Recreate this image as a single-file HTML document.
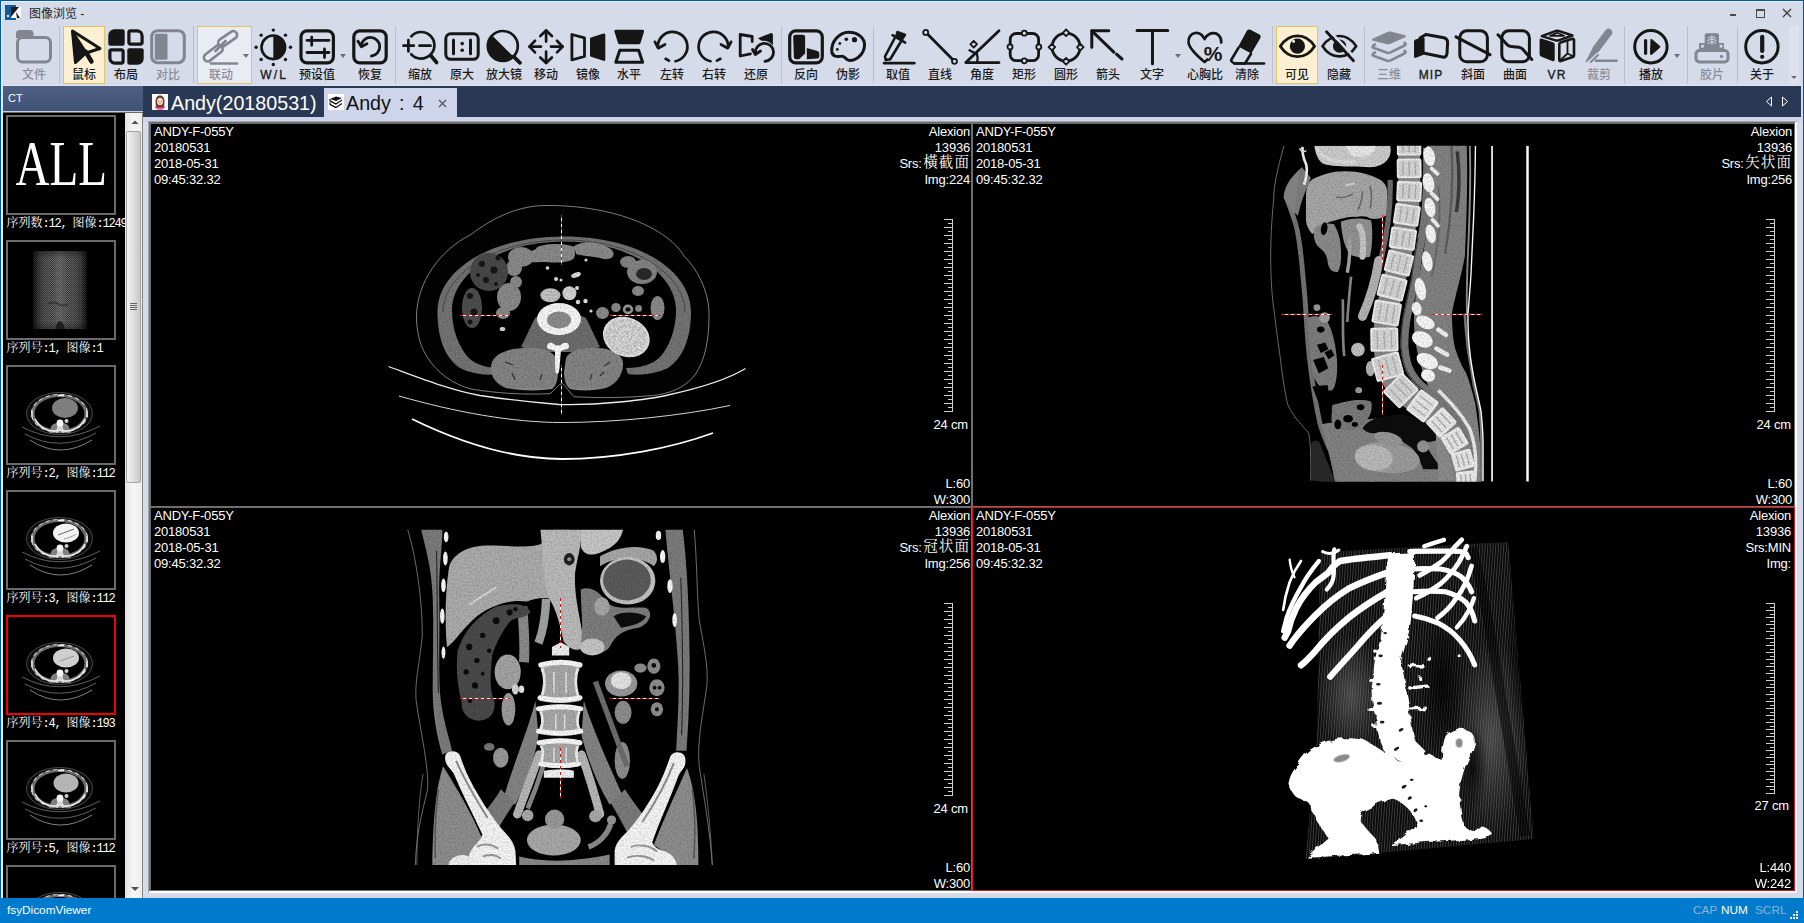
<!DOCTYPE html>
<html lang="zh-CN">
<head>
<meta charset="utf-8">
<title>图像浏览 - fsyDicomViewer</title>
<style>
*{box-sizing:border-box;margin:0;padding:0}
html,body{width:1804px;height:923px;overflow:hidden;background:#d6dbe9}
body{font-family:"Liberation Sans","Noto Sans CJK SC",sans-serif;position:relative}
#win{position:absolute;left:0;top:0;width:1804px;height:923px;background:#d6dbe9;overflow:hidden}
.abs{position:absolute}
#bt{left:0;top:0;width:1804px;height:1px;background:#005a9e}
#bl{left:0;top:0;width:1px;height:923px;background:#005a9e}
#br{left:1803px;top:0;width:1px;height:923px;background:#005a9e}
#title{left:29px;top:6px;font-size:12px;line-height:16px;color:#1e1e1e;white-space:nowrap}
.sep{position:absolute;top:26px;width:1px;height:57px;background:#bcc0cd}
.tbtn{position:absolute;top:26px;height:58px;border:1px solid #e5c365;background:#fdf0d2}
.tbtn.h{background:#e9ecf2}
.ico{position:absolute;top:29px;width:36px;height:36px;overflow:visible}
.lbl{position:absolute;top:66.5px;width:60px;margin-left:-30px;text-align:center;font-size:12px;line-height:16px;color:#1b1b1b;font-weight:500;white-space:nowrap;font-family:"Liberation Sans","Noto Sans CJK SC",sans-serif}
.lbl.g{color:#8b8e9a}
.lbl.e{font-weight:400;letter-spacing:1.1px;font-size:12px;-webkit-text-stroke:0.35px #1b1b1b}
.dd{position:absolute;width:0;height:0;border-left:3.5px solid transparent;border-right:3.5px solid transparent;border-top:4px solid #6d6f78}
#cthead{left:3px;top:86px;width:140px;height:25px;background:linear-gradient(#4d6082,#3f5378);color:#fff;font-size:11px;line-height:25px;padding-left:5px}
#side{left:3px;top:113px;width:122px;height:785px;background:#000;overflow:hidden}
.th{position:absolute;left:3px;width:110px;height:100px;border:2px solid #6b6b6b;background:#000;overflow:hidden}
.th.sel{border-color:#f00000}
.tl{position:absolute;left:3.5px;width:140px;font-size:12px;line-height:14px;color:#fff;white-space:nowrap;font-family:"Liberation Mono","Noto Serif CJK SC",serif;letter-spacing:0}
.tl b{font-weight:400;font-family:"Liberation Mono",monospace;letter-spacing:-1.2px;white-space:pre}
#sb{left:125px;top:113px;width:17px;height:785px;background:linear-gradient(90deg,#e4e4e4,#f6f6f6 50%,#ededed)}
#tabbar{left:143px;top:86px;width:1658px;height:31px;background:#293955}
#tab1{left:148px;top:88px;height:29px;color:#fff;font-size:19.7px;line-height:29px;white-space:nowrap}
#tab2{left:324px;top:88px;width:133px;height:29px;background:#ced4ea;color:#111;font-size:19.5px;line-height:29px;white-space:nowrap}
#status{left:0;top:898px;width:1804px;height:25px;background:#007acc;color:#fff;font-size:11.8px;line-height:24px}
.pan{position:absolute;background:#000;border:1px solid #6e6e6e;overflow:hidden;color:#fff;font-size:13px;line-height:16px;letter-spacing:-0.2px;font-family:"Liberation Sans","Noto Sans CJK SC",sans-serif}
.pan.sel{border-color:#e8131a}
.tlb{position:absolute;left:3px;top:-0.5px;white-space:pre;text-align:left}
.trb{position:absolute;right:1px;top:-0.5px;white-space:pre;text-align:right}
.brb{position:absolute;right:1px;bottom:-1.5px;white-space:pre;text-align:right}
.cm{position:absolute;right:3px;white-space:pre}
.cj{font-family:"Liberation Serif","Noto Serif CJK SC",serif;font-size:14.5px;letter-spacing:1.1px;margin-left:1.5px;line-height:0;position:relative;top:-0.3px}
svg{display:block}
</style>
</head>
<body>
<div id="win">

<div class="abs" id="bt"></div><div class="abs" style="left:1px;top:1px;width:1802px;height:1px;background:#eceef5"></div><div class="abs" id="bl"></div><div class="abs" id="br"></div>
<svg class="abs" style="left:5px;top:5px" width="16" height="16" viewBox="0 0 16 16"><rect x="0" y="0" width="11" height="15" fill="#0f5d9d"/><rect x="6" y="2" width="10" height="11" fill="#fff"/><path d="M6 2h8L6 12z" fill="#1a1a1a"/><path d="M11 7l4 6h-3z" fill="#1a1a1a"/><rect x="2" y="10" width="2" height="2" fill="#fff"/></svg>
<div class="abs" id="title">图像浏览 -</div>

<div class="sep" style="left:59px"></div>
<div class="sep" style="left:193px"></div>
<div class="sep" style="left:395px"></div>
<div class="sep" style="left:781px"></div>
<div class="sep" style="left:873px"></div>
<div class="sep" style="left:1272px"></div>
<div class="sep" style="left:1364px"></div>
<div class="sep" style="left:1624px"></div>
<div class="sep" style="left:1687px"></div>
<div class="sep" style="left:1737px"></div>
<div class="tbtn" style="left:63px;width:42px"></div>
<div class="tbtn h" style="left:197px;width:55px"></div>
<div class="tbtn" style="left:1276px;width:42px"></div>
<svg class="ico" style="left:16px;color:#84868f" viewBox="0 0 36 36" fill="none" stroke="none"><path d="M0 9V4.500a3.500 3.500 0 0 1 3.500-3.500h10.500a3.500 3.500 0 0 1 3.500 3.500V9z" fill="currentColor"/><rect x="1.500" y="8.500" width="33" height="24.500" rx="5" fill="none" stroke="currentColor" stroke-width="3" stroke-linecap="round" stroke-linejoin="round" /></svg>
<div class="lbl g" style="left:34px">文件</div>
<svg class="ico" style="left:66px;color:#161616" viewBox="0 0 36 36" fill="none" stroke="none"><path d="M6.500 2L9.500 33.500L20 24L34 19.500Z" fill="none" stroke="currentColor" stroke-width="3" stroke-linecap="round" stroke-linejoin="round" /><path d="M6.500 2L9.500 33.500L20.500 23.500Z" fill="currentColor" stroke="currentColor" stroke-width="2" stroke-linejoin="round"/><path d="M19.500 22.500L25.500 32.500" fill="none" stroke="currentColor" stroke-width="4.4" stroke-linecap="round" stroke-linejoin="round" /></svg>
<div class="lbl" style="left:84px">鼠标</div>
<svg class="ico" style="left:108px;color:#161616" viewBox="0 0 36 36" fill="none" stroke="none"><path d="M6.3 0.3H14.7A2 2 0 0 1 16.7 2.3V14.7A2 2 0 0 1 14.7 16.7H2.3A2 2 0 0 1 0.3 14.7V6.3A6 6 0 0 1 6.3 0.3Z" fill="currentColor"/><path d="M22.4 1.9H29.099999999999994A5 5 0 0 1 34.099999999999994 6.9V13.6A1.5 1.5 0 0 1 32.599999999999994 15.1H22.4A1.5 1.5 0 0 1 20.9 13.6V3.4A1.5 1.5 0 0 1 22.4 1.9Z" fill="none" stroke="currentColor" stroke-width="3.2" stroke-linecap="round" stroke-linejoin="round" /><path d="M3.4 20.9H13.6A1.5 1.5 0 0 1 15.1 22.4V32.599999999999994A1.5 1.5 0 0 1 13.6 34.099999999999994H6.9A5 5 0 0 1 1.9 29.099999999999994V22.4A1.5 1.5 0 0 1 3.4 20.9Z" fill="none" stroke="currentColor" stroke-width="3.2" stroke-linecap="round" stroke-linejoin="round" /><path d="M21.3 19.3H33.7A2 2 0 0 1 35.7 21.3V29.700000000000003A6 6 0 0 1 29.700000000000003 35.7H21.3A2 2 0 0 1 19.3 33.7V21.3A2 2 0 0 1 21.3 19.3Z" fill="currentColor"/></svg>
<div class="lbl" style="left:126px">布局</div>
<svg class="ico" style="left:150px;color:#84868f" viewBox="0 0 36 36" fill="none" stroke="none"><rect x="1.700" y="1.700" width="32.600" height="32" rx="6" fill="none" stroke="currentColor" stroke-width="3.1" stroke-linecap="round" stroke-linejoin="round" /><rect x="4.800" y="4.800" width="12.700" height="26" rx="1.500" fill="currentColor"/></svg>
<div class="lbl g" style="left:168px">对比</div>
<svg class="ico" style="left:203px;color:#84868f" viewBox="0 0 36 36" fill="none" stroke="none"><path d="M19.100 13.600L30.200 6" stroke="currentColor" stroke-width="10.400" stroke-linecap="round" fill="none"/><path d="M19.100 13.600L30.200 6" stroke="#e9ecf2" stroke-width="5" stroke-linecap="round" fill="none"/><path d="M4.700 28.600L15.800 20" stroke="currentColor" stroke-width="10.400" stroke-linecap="round" fill="none"/><path d="M4.700 28.600L15.800 20" stroke="#e9ecf2" stroke-width="5" stroke-linecap="round" fill="none"/><path d="M12.500 22L22.500 12" fill="none" stroke="currentColor" stroke-width="2.7" stroke-linecap="round" stroke-linejoin="round" /><path d="M8 34.500H34" fill="none" stroke="currentColor" stroke-width="2.7" stroke-linecap="round" stroke-linejoin="round" /></svg>
<div class="lbl g" style="left:221px">联动</div>
<svg class="ico" style="left:255px;color:#161616" viewBox="0 0 36 36" fill="none" stroke="none"><circle cx="18.300" cy="18.300" r="11.800" fill="none" stroke="currentColor" stroke-width="2.6" stroke-linecap="round" stroke-linejoin="round" /><path d="M18.300 6.500A11.800 11.800 0 0 1 18.300 30.100Z" fill="currentColor"/><circle cx="35.50" cy="18.30" r="1.700" fill="currentColor"/><circle cx="30.46" cy="30.46" r="1.700" fill="currentColor"/><circle cx="18.30" cy="35.50" r="1.700" fill="currentColor"/><circle cx="6.14" cy="30.46" r="1.700" fill="currentColor"/><circle cx="1.10" cy="18.30" r="1.700" fill="currentColor"/><circle cx="6.14" cy="6.14" r="1.700" fill="currentColor"/><circle cx="18.30" cy="1.10" r="1.700" fill="currentColor"/><circle cx="30.46" cy="6.14" r="1.700" fill="currentColor"/></svg>
<div class="lbl e" style="left:273px;letter-spacing:2.2px;margin-left:-28.9px">W/L</div>
<svg class="ico" style="left:299px;color:#161616" viewBox="0 0 36 36" fill="none" stroke="none"><rect x="2" y="1.800" width="32.400" height="32" rx="6" fill="none" stroke="currentColor" stroke-width="3.2" stroke-linecap="round" stroke-linejoin="round" /><path d="M8 11.300H30M12.700 8.200V16.300M8 23.500H30M25.500 20V28.600" fill="none" stroke="currentColor" stroke-width="2.8" stroke-linecap="round" stroke-linejoin="round" /></svg>
<div class="lbl" style="left:317px">预设值</div>
<svg class="ico" style="left:352px;color:#161616" viewBox="0 0 36 36" fill="none" stroke="none"><rect x="1.800" y="1.800" width="32.400" height="32" rx="6" fill="none" stroke="currentColor" stroke-width="3.2" stroke-linecap="round" stroke-linejoin="round" /><path d="M9.200 16.500A9.300 9.300 0 1 1 19.500 27" fill="none" stroke="currentColor" stroke-width="2.8" stroke-linecap="round" stroke-linejoin="round" /><path d="M6 12.200L9.400 17.800L15 14.800" fill="none" stroke="currentColor" stroke-width="2.8" stroke-linecap="round" stroke-linejoin="round" /></svg>
<div class="lbl" style="left:370px">恢复</div>
<svg class="ico" style="left:402px;color:#161616" viewBox="0 0 36 36" fill="none" stroke="none"><path d="M9.300 7.300A13.300 13.300 0 1 1 9.300 25.300" fill="none" stroke="currentColor" stroke-width="2.7" stroke-linecap="round" stroke-linejoin="round" /><path d="M28.800 26.500L34.600 33.500" fill="none" stroke="currentColor" stroke-width="3.6" stroke-linecap="round" stroke-linejoin="round" /><path d="M1.500 16.700H11.800M6.400 11.200V22.400M17.500 16.700H28.500" fill="none" stroke="currentColor" stroke-width="2.7" stroke-linecap="round" stroke-linejoin="round" /></svg>
<div class="lbl" style="left:420px">缩放</div>
<svg class="ico" style="left:444px;color:#161616" viewBox="0 0 36 36" fill="none" stroke="none"><rect x="1.800" y="4.800" width="32.400" height="25.500" rx="5" fill="none" stroke="currentColor" stroke-width="3" stroke-linecap="round" stroke-linejoin="round" /><path d="M9.500 11V24.800M26.500 11V24.800" fill="none" stroke="currentColor" stroke-width="3" stroke-linecap="round" stroke-linejoin="round" /><circle cx="18.200" cy="14.600" r="1.800" fill="currentColor"/><circle cx="18.200" cy="21.200" r="1.800" fill="currentColor"/></svg>
<div class="lbl" style="left:462px">原大</div>
<svg class="ico" style="left:486px;color:#161616" viewBox="0 0 36 36" fill="none" stroke="none"><circle cx="16.800" cy="17" r="15" fill="none" stroke="currentColor" stroke-width="2.7" stroke-linecap="round" stroke-linejoin="round" /><path d="M6.200 6.400A15 15 0 0 0 27.400 27.600Z" fill="currentColor"/><path d="M27.500 27.500L34 33.800" fill="none" stroke="currentColor" stroke-width="3.8" stroke-linecap="round" stroke-linejoin="round" /></svg>
<div class="lbl" style="left:504px">放大镜</div>
<svg class="ico" style="left:528px;color:#161616" viewBox="0 0 36 36" fill="none" stroke="none"><path d="M1.500 17.600H13M23 17.600H34.600M18.100 1.500V12.600M18.100 22.600V34" fill="none" stroke="currentColor" stroke-width="2.7" stroke-linecap="round" stroke-linejoin="round" /><path d="M7 11.800L1.500 17.600L7 23.400M29 11.800L34.600 17.600L29 23.400M12.300 7L18.100 1.500L23.900 7M12.300 28.500L18.100 34L23.900 28.500" fill="none" stroke="currentColor" stroke-width="2.7" stroke-linecap="round" stroke-linejoin="round" /></svg>
<div class="lbl" style="left:546px">移动</div>
<svg class="ico" style="left:570px;color:#161616" viewBox="0 0 36 36" fill="none" stroke="none"><path d="M1.900 5.500L14.500 8.800V27.500L1.900 30.800Z" fill="none" stroke="currentColor" stroke-width="2.8" stroke-linecap="round" stroke-linejoin="round" /><path d="M21 8.500L33.500 4.500Q35.300 4 35.300 6V30.300Q35.300 32.300 33.500 31.800L21 27.800Q20 27.500 20 26.500V9.800Q20 8.800 21 8.500Z" fill="currentColor"/></svg>
<div class="lbl" style="left:588px">镜像</div>
<svg class="ico" style="left:611px;color:#161616" viewBox="0 0 36 36" fill="none" stroke="none"><path d="M5 0.700H31.500Q33.600 0.700 33 2.800L29.500 14Q29 15.300 27.800 15.300H8.600Q7.400 15.300 7 14L3.500 2.800Q2.900 0.700 5 0.700Z" fill="currentColor"/><path d="M8.800 21.200H27.600L31.600 33.300H4.800Z" fill="none" stroke="currentColor" stroke-width="3" stroke-linecap="round" stroke-linejoin="round" /></svg>
<div class="lbl" style="left:629px">水平</div>
<svg class="ico" style="left:654px;color:#161616" viewBox="0 0 36 36" fill="none" stroke="none"><path d="M3.800 18A14.800 14.800 0 1 1 21.500 32.200" fill="none" stroke="currentColor" stroke-width="2.7" stroke-linecap="round" stroke-linejoin="round" /><path d="M0.900 12.800L4.200 19.200L11 15.500" fill="none" stroke="currentColor" stroke-width="2.7" stroke-linecap="round" stroke-linejoin="round" /><path d="M11.600 29.800L15 31.600" fill="none" stroke="currentColor" stroke-width="2.7" stroke-linecap="round" stroke-linejoin="round" /></svg>
<div class="lbl" style="left:672px">左转</div>
<svg class="ico" style="left:696px;color:#161616" viewBox="0 0 36 36" fill="none" stroke="none"><g transform="translate(36 0) scale(-1 1)"><path d="M3.800 18A14.800 14.800 0 1 1 21.500 32.200" fill="none" stroke="currentColor" stroke-width="2.7" stroke-linecap="round" stroke-linejoin="round" /><path d="M0.900 12.800L4.200 19.200L11 15.500" fill="none" stroke="currentColor" stroke-width="2.7" stroke-linecap="round" stroke-linejoin="round" /><path d="M11.600 29.800L15 31.600" fill="none" stroke="currentColor" stroke-width="2.7" stroke-linecap="round" stroke-linejoin="round" /></g></svg>
<div class="lbl" style="left:714px">右转</div>
<svg class="ico" style="left:738px;color:#161616" viewBox="0 0 36 36" fill="none" stroke="none"><path d="M12.500 24.800L2.200 27V5.500L14.200 7.500V12.500" fill="none" stroke="currentColor" stroke-width="2.8" stroke-linecap="round" stroke-linejoin="round" /><path d="M19.900 9.200L32.600 4.200Q34.900 3.600 34.900 6V16.500Q31 11 23.500 11.800Z" fill="currentColor"/><path d="M17.500 24A9 9 0 1 1 27 32.300" fill="none" stroke="currentColor" stroke-width="2.8" stroke-linecap="round" stroke-linejoin="round" /><path d="M14.500 20.500L17.300 25.500L22.500 22" fill="none" stroke="currentColor" stroke-width="2.8" stroke-linecap="round" stroke-linejoin="round" /></svg>
<div class="lbl" style="left:756px">还原</div>
<svg class="ico" style="left:788px;color:#161616" viewBox="0 0 36 36" fill="none" stroke="none"><rect x="1.700" y="1.800" width="32.600" height="32" rx="6" fill="none" stroke="currentColor" stroke-width="3.2" stroke-linecap="round" stroke-linejoin="round" /><path d="M7.500 5.800H15Q17.100 5.800 17.100 8V24.500L12 29.600Q11.300 30.200 10.300 30.200H8Q6.200 30.200 5.900 28.300L5.200 8Q5.200 5.800 7.500 5.800Z" fill="currentColor"/><path d="M18.800 19L29.500 22Q31.300 22.600 31.300 24.500V27.500Q31.300 29.500 29.300 29.600L18.800 30.200Z" fill="currentColor"/></svg>
<div class="lbl" style="left:806px">反向</div>
<svg class="ico" style="left:830px;color:#161616" viewBox="0 0 36 36" fill="none" stroke="none"><path d="M18.500 3.200C28 3.200 35 9 34.500 16.500C34 25 27 31.500 19.500 31.500C15.500 31.500 15.800 27.200 12 27.300C8 27.500 2.500 28.500 1.800 22.500C1 13 9 3.200 18.500 3.200Z" fill="none" stroke="currentColor" stroke-width="3" stroke-linecap="round" stroke-linejoin="round" /><circle cx="24.500" cy="10.700" r="2.600" fill="currentColor"/><circle cx="16.300" cy="10.200" r="1.800" fill="currentColor"/><circle cx="9.800" cy="14.500" r="1.400" fill="currentColor"/><circle cx="7.300" cy="20.400" r="1.400" fill="currentColor"/></svg>
<div class="lbl" style="left:848px">伪影</div>
<svg class="ico" style="left:880px;color:#161616" viewBox="0 0 36 36" fill="none" stroke="none"><path d="M17.500 1.800L25.800 4.800Q26.600 5.500 26 6.500L22.200 12.500L14.700 8.500L16.300 2.600Q16.700 1.500 17.500 1.800Z" fill="currentColor"/><path d="M12.500 6.200L25.200 13.700" fill="none" stroke="currentColor" stroke-width="2.5" stroke-linecap="round" stroke-linejoin="round" /><path d="M14.500 9.500L5 27.500L5.700 31L10.200 30.200L20.700 13" fill="none" stroke="currentColor" stroke-width="2.6" stroke-linecap="round" stroke-linejoin="round" /><path d="M4.200 34.200H34.200" fill="none" stroke="currentColor" stroke-width="2.8" stroke-linecap="round" stroke-linejoin="round" /></svg>
<div class="lbl" style="left:898px">取值</div>
<svg class="ico" style="left:922px;color:#161616" viewBox="0 0 36 36" fill="none" stroke="none"><path d="M3.700 3.200L32.600 32.400" fill="none" stroke="currentColor" stroke-width="2.8" stroke-linecap="round" stroke-linejoin="round" /><circle cx="3.700" cy="3.400" r="2.500" fill="#d6dbe9" stroke="currentColor" stroke-width="1.800"/><circle cx="32.500" cy="32.300" r="2.500" fill="#d6dbe9" stroke="currentColor" stroke-width="1.800"/></svg>
<div class="lbl" style="left:940px">直线</div>
<svg class="ico" style="left:964px;color:#161616" viewBox="0 0 36 36" fill="none" stroke="none"><path d="M35 1.700L1.800 33.600H35" fill="none" stroke="currentColor" stroke-width="2.8" stroke-linecap="round" stroke-linejoin="round" /><path d="M12.800 24.200Q14.200 29 13.200 33" fill="none" stroke="currentColor" stroke-width="2.3" stroke-linecap="round" stroke-linejoin="round" /><path d="M5.500 21.200L11 24.300" fill="none" stroke="currentColor" stroke-width="2.3" stroke-linecap="round" stroke-linejoin="round" /><path d="M9.700 11.800L13 15.200L9.700 18.600L6.400 15.200Z" fill="#d6dbe9" stroke="currentColor" stroke-width="1.800" stroke-linejoin="round"/></svg>
<div class="lbl" style="left:982px">角度</div>
<svg class="ico" style="left:1006px;color:#161616" viewBox="0 0 36 36" fill="none" stroke="none"><rect x="4.200" y="4.500" width="28.400" height="27.200" rx="6" fill="none" stroke="currentColor" stroke-width="2.8" stroke-linecap="round" stroke-linejoin="round" /><circle cx="18.3" cy="4.2" r="2.500" fill="#d6dbe9" stroke="currentColor" stroke-width="1.800"/><circle cx="4" cy="17.9" r="2.500" fill="#d6dbe9" stroke="currentColor" stroke-width="1.800"/><circle cx="32.8" cy="17.9" r="2.500" fill="#d6dbe9" stroke="currentColor" stroke-width="1.800"/><circle cx="18.3" cy="31.8" r="2.500" fill="#d6dbe9" stroke="currentColor" stroke-width="1.800"/></svg>
<div class="lbl" style="left:1024px">矩形</div>
<svg class="ico" style="left:1048px;color:#161616" viewBox="0 0 36 36" fill="none" stroke="none"><circle cx="18.100" cy="18.100" r="14" fill="none" stroke="currentColor" stroke-width="2.8" stroke-linecap="round" stroke-linejoin="round" /><path d="M18.1 0.5L21.400000000000002 3.8L18.1 7.1L14.8 3.8Z" fill="#d6dbe9" stroke="currentColor" stroke-width="1.800" stroke-linejoin="round"/><path d="M3.9 14.8L7.199999999999999 18.1L3.9 21.400000000000002L0.6000000000000001 18.1Z" fill="#d6dbe9" stroke="currentColor" stroke-width="1.800" stroke-linejoin="round"/><path d="M32.3 14.8L35.599999999999994 18.1L32.3 21.400000000000002L28.999999999999996 18.1Z" fill="#d6dbe9" stroke="currentColor" stroke-width="1.800" stroke-linejoin="round"/><path d="M18.1 28.999999999999996L21.400000000000002 32.3L18.1 35.599999999999994L14.8 32.3Z" fill="#d6dbe9" stroke="currentColor" stroke-width="1.800" stroke-linejoin="round"/></svg>
<div class="lbl" style="left:1066px">圆形</div>
<svg class="ico" style="left:1090px;color:#161616" viewBox="0 0 36 36" fill="none" stroke="none"><path d="M18.800 1.800H1.800V18.200" fill="none" stroke="currentColor" stroke-width="3" stroke-linecap="round" stroke-linejoin="round" /><path d="M1.800 1.800L23.800 23.200M26.500 25.200L32 30" fill="none" stroke="currentColor" stroke-width="3" stroke-linecap="round" stroke-linejoin="round" /></svg>
<div class="lbl" style="left:1108px">箭头</div>
<svg class="ico" style="left:1134px;color:#161616" viewBox="0 0 36 36" fill="none" stroke="none"><path d="M3 1.400H33.800M18.500 1.400V34.800" fill="none" stroke="currentColor" stroke-width="3" stroke-linecap="round" stroke-linejoin="round" /></svg>
<div class="lbl" style="left:1152px">文字</div>
<svg class="ico" style="left:1187px;color:#161616" viewBox="0 0 36 36" fill="none" stroke="none"><path d="M34.200 13.500C34.500 7 30 3.800 26 4.200C22.500 4.500 19.500 6.500 17.500 10C15.500 6 12 3.500 8 4C3.500 4.800 0.800 9 1.600 14C2.500 19 8 25 17.500 33L20.500 30.500" fill="none" stroke="currentColor" stroke-width="2.7" stroke-linecap="round" stroke-linejoin="round" /><text x="26" y="32.300" font-family="'Liberation Sans',sans-serif" font-weight="700" font-size="21" text-anchor="middle" fill="currentColor">%</text></svg>
<div class="lbl" style="left:1205px">心胸比</div>
<svg class="ico" style="left:1229px;color:#161616" viewBox="0 0 36 36" fill="none" stroke="none"><path d="M18 1.500Q19.500 -0.300 21.500 0.800L30.500 5.600Q32.500 6.800 31.500 8.800L22.300 24.600L9.300 17.600Z" fill="currentColor"/><path d="M9.600 18.600L2.500 30.500Q1.600 32 3.200 33L5.500 34.500H16L22 24.800" fill="none" stroke="currentColor" stroke-width="2.6" stroke-linecap="round" stroke-linejoin="round" /><path d="M5.500 34.500H35" fill="none" stroke="currentColor" stroke-width="2.6" stroke-linecap="round" stroke-linejoin="round" /></svg>
<div class="lbl" style="left:1247px">清除</div>
<svg class="ico" style="left:1279px;color:#161616" viewBox="0 0 36 36" fill="none" stroke="none"><path d="M1.300 17.200C6 10 12 6.800 18.400 6.800C25 6.800 31 10 35.600 17.200C31 24.500 25 27.600 18.400 27.600C12 27.600 6 24.500 1.300 17.200Z" fill="none" stroke="currentColor" stroke-width="2.8" stroke-linecap="round" stroke-linejoin="round" /><circle cx="18.400" cy="17.200" r="7.600" fill="currentColor"/><circle cx="14.600" cy="12.400" r="1.400" fill="#fff"/></svg>
<div class="lbl" style="left:1297px">可见</div>
<svg class="ico" style="left:1321px;color:#161616" viewBox="0 0 36 36" fill="none" stroke="none"><path d="M1.500 17.200C6 10.500 12 7 18.500 7C25 7 30.800 10.500 35.200 17.200C30.800 24 25 27.400 18.500 27.400C12 27.400 6 24 1.500 17.200Z" fill="none" stroke="currentColor" stroke-width="2.6" stroke-linecap="round" stroke-linejoin="round" /><circle cx="18.600" cy="17.200" r="6.600" fill="currentColor"/><path d="M8 1.200L35 30.200" stroke="#d6dbe9" stroke-width="2.600" fill="none"/><path d="M5.500 2.800L32.500 31.800" fill="none" stroke="currentColor" stroke-width="2.8" stroke-linecap="round" stroke-linejoin="round" /></svg>
<div class="lbl" style="left:1339px">隐藏</div>
<svg class="ico" style="left:1371px;color:#84868f" viewBox="0 0 36 36" fill="none" stroke="none"><path d="M1.500 9.800L17 2.800Q18.200 2.300 19.500 2.600L34 6.300Q36 7.200 34.200 8.300L19 15Q17.500 15.600 16.200 15.200L1.800 11.700Q0 10.800 1.500 9.800Z" fill="currentColor"/><path d="M4 15.500Q-0.500 17.800 3 19L16.200 23.800Q17.500 24.200 19 23.600L33.500 16.500Q36 15 33.500 13.800" fill="none" stroke="currentColor" stroke-width="2.6" stroke-linecap="round" stroke-linejoin="round" /><path d="M4 23.500Q-0.500 25.800 3 27L16.200 31.800Q17.500 32.200 19 31.600L33.500 24.500Q36 23 33.500 21.800" fill="none" stroke="currentColor" stroke-width="2.6" stroke-linecap="round" stroke-linejoin="round" /></svg>
<div class="lbl g" style="left:1389px">三维</div>
<svg class="ico" style="left:1413px;color:#161616" viewBox="0 0 36 36" fill="none" stroke="none"><path d="M13 5.500L31 8.800Q34.800 10 34.600 14L34 24.500Q33.500 28.800 29.500 28L11.400 24.200" fill="none" stroke="currentColor" stroke-width="3" stroke-linecap="round" stroke-linejoin="round" /><path d="M2.500 10.500L9.500 8.300Q11.600 7.800 11.600 10V24Q11.600 25.200 10.500 25.700L3 28.800Q1 29.300 1 27.200V12.500Q1 11 2.500 10.500Z" fill="currentColor"/><path d="M7 9L13 5.500" fill="none" stroke="currentColor" stroke-width="3" stroke-linecap="round" stroke-linejoin="round" /></svg>
<div class="lbl e" style="left:1431px">MIP</div>
<svg class="ico" style="left:1455px;color:#161616" viewBox="0 0 36 36" fill="none" stroke="none"><rect x="4.800" y="1.800" width="27.600" height="31" rx="7" fill="none" stroke="currentColor" stroke-width="3" stroke-linecap="round" stroke-linejoin="round" /><path d="M1 7.800L35 25.700" fill="none" stroke="currentColor" stroke-width="3" stroke-linecap="round" stroke-linejoin="round" /></svg>
<div class="lbl" style="left:1473px">斜面</div>
<svg class="ico" style="left:1497px;color:#161616" viewBox="0 0 36 36" fill="none" stroke="none"><rect x="4.800" y="1.800" width="27.600" height="31" rx="7" fill="none" stroke="currentColor" stroke-width="3" stroke-linecap="round" stroke-linejoin="round" /><path d="M1 5.800L10 15.500Q11.500 17.200 14 17.400L22 18.200Q24.500 18.500 26 20.500L34.800 30.500" fill="none" stroke="currentColor" stroke-width="3" stroke-linecap="round" stroke-linejoin="round" /></svg>
<div class="lbl" style="left:1515px">曲面</div>
<svg class="ico" style="left:1539px;color:#161616" viewBox="0 0 36 36" fill="none" stroke="none"><path d="M2.800 7.200L17 1.900Q18.300 1.500 19.600 1.900L33.500 6.500L19.500 11.300Q18 11.800 16.500 11.300Z" fill="none" stroke="currentColor" stroke-width="2.4" stroke-linecap="round" stroke-linejoin="round" /><path d="M11 6.800L18.200 3.800L25 6.800Z" fill="none" stroke="currentColor" stroke-width="1.8" stroke-linecap="round" stroke-linejoin="round" /><path d="M2.300 9.600L14 13.200Q15.700 13.800 15.700 15.600V30.200Q15.700 32.800 13.200 31.900L2.500 27.700Q0.600 27 0.600 25V11Q0.600 9.100 2.300 9.600Z" fill="currentColor"/><path d="M20.300 15.400Q20.300 14 21.600 13.500L33.500 9.800Q35 9.400 35 11V26.200Q35 27.600 33.700 28.100L21.800 32Q20.300 32.400 20.300 30.800Z" fill="none" stroke="currentColor" stroke-width="2.6" stroke-linecap="round" stroke-linejoin="round" /><path d="M21 31.500L28.500 24.500L34.500 27.500M28.500 24.500V12" fill="none" stroke="currentColor" stroke-width="1.8" stroke-linecap="round" stroke-linejoin="round" /></svg>
<div class="lbl e" style="left:1557px">VR</div>
<svg class="ico" style="left:1581px;color:#84868f" viewBox="0 0 36 36" fill="none" stroke="none"><path d="M27.500 3.500L15.500 19.500" stroke="currentColor" stroke-width="7.500" stroke-linecap="round" fill="none"/><path d="M12.800 17L18.500 21.500L6 33Q4.200 33.800 4.800 32Z" fill="currentColor"/><path d="M14.800 31.700H35.600" fill="none" stroke="currentColor" stroke-width="2.4" stroke-linecap="round" stroke-linejoin="round" /><path d="M9.800 33L17 26" fill="none" stroke="currentColor" stroke-width="2" stroke-linecap="round" stroke-linejoin="round" /></svg>
<div class="lbl g" style="left:1599px">裁剪</div>
<svg class="ico" style="left:1633px;color:#161616" viewBox="0 0 36 36" fill="none" stroke="none"><circle cx="17.900" cy="17.700" r="16.200" fill="none" stroke="currentColor" stroke-width="3" stroke-linecap="round" stroke-linejoin="round" /><path d="M12.600 11.500V24.300" fill="none" stroke="currentColor" stroke-width="3.2" stroke-linecap="round" stroke-linejoin="round" /><path d="M18 10.800Q17.500 9.800 18.800 10.600L26.500 17Q27.500 17.800 26.500 18.600L18.800 25.300Q17.500 26 17.500 24.800Z" fill="currentColor" stroke="currentColor" stroke-width="1" stroke-linejoin="round"/></svg>
<div class="lbl" style="left:1651px">播放</div>
<svg class="ico" style="left:1694px;color:#84868f" viewBox="0 0 36 36" fill="none" stroke="none"><path d="M10.700 6Q10.700 4.200 12.500 4.200H23.200Q25 4.200 25 6V13.900H30V20.500H5.100V13.900H10.700Z" fill="currentColor"/><rect x="7.200" y="15.800" width="2.600" height="2.800" fill="#d6dbe9"/><rect x="25.800" y="15.800" width="2.600" height="2.800" fill="#d6dbe9"/><path d="M17.900 6.500V16M13.800 9.500Q17.900 6 22 9.500M13.300 12Q17.900 8.500 22.500 12M13.800 14.500Q17.900 11.300 22 14.500" stroke="#d6dbe9" stroke-width="1" fill="none"/><rect x="2" y="21.500" width="32" height="11.500" rx="3.500" fill="none" stroke="currentColor" stroke-width="3" stroke-linecap="round" stroke-linejoin="round" /><circle cx="27.500" cy="27.400" r="1.700" fill="currentColor"/></svg>
<div class="lbl g" style="left:1712px">胶片</div>
<svg class="ico" style="left:1744px;color:#161616" viewBox="0 0 36 36" fill="none" stroke="none"><circle cx="17.900" cy="17.700" r="16.200" fill="none" stroke="currentColor" stroke-width="3" stroke-linecap="round" stroke-linejoin="round" /><path d="M18.200 7.800V22" fill="none" stroke="currentColor" stroke-width="4.2" stroke-linecap="round" stroke-linejoin="round" /><circle cx="18.200" cy="27.800" r="2.100" fill="currentColor"/></svg>
<div class="lbl" style="left:1762px">关于</div>
<div class="dd" style="left:243px;top:54px"></div>
<div class="dd" style="left:340px;top:54px"></div>
<div class="dd" style="left:1175px;top:54px"></div>
<div class="dd" style="left:1674px;top:54px"></div>
<div class="abs" style="left:1789px;top:26px;width:10px;height:58px;background:#dee2ed"></div><div class="dd" style="left:1791px;top:76px;border-left-width:3px;border-right-width:3px;border-top-width:3.5px"></div>
<div class="abs" style="left:1730px;top:14px;width:6px;height:2px;background:#4a4a4a"></div>
<div class="abs" style="left:1756px;top:9px;width:9px;height:9px;border:1px solid #4a4a4a;border-top-width:2px"></div>
<svg class="abs" style="left:1782px;top:8px" width="10" height="10" viewBox="0 0 10 10"><path d="M1 1l8 8M9 1l-8 8" stroke="#3a3a3a" stroke-width="1.3"/></svg>

<div class="abs" id="cthead">CT</div>
<div class="abs" style="left:3px;top:111px;width:140px;height:1px;background:#c9cfe2"></div><div class="abs" style="left:3px;top:112px;width:140px;height:1px;background:#6a6a6a"></div>
<div class="abs" style="left:1px;top:2px;width:1px;height:896px;background:#ebedf6"></div><div class="abs" style="left:2px;top:86px;width:1px;height:812px;background:#e6e9f3"></div><div class="abs" style="left:3px;top:85px;width:1798px;height:1px;background:#e1e5f0"></div>
<div class="abs" id="side">
<div class="th" style="top:2px"><svg width="106" height="96" viewBox="0 0 106 96"><text x="7.500" y="67.500" font-family="'Liberation Serif',serif" font-size="63" fill="#fff" textLength="91.500" lengthAdjust="spacingAndGlyphs">ALL</text></svg></div>
<div class="tl" style="top:103.5px">序列数<b>:12, </b>图像<b>:1249</b></div>
<div class="th" style="top:127px"><svg width="106" height="96" viewBox="0 0 106 96"><defs><pattern id="scp" width="2" height="2" patternUnits="userSpaceOnUse"><rect width="2" height="2" fill="#303030"/><rect width="1" height="1" fill="#5e5e5e"/><rect x="1" y="1" width="1" height="1" fill="#4c4c4c"/></pattern><linearGradient id="scg" x1="0" x2="1" y1="0" y2="0"><stop offset="0" stop-color="#000" stop-opacity=".75"/><stop offset=".12" stop-color="#000" stop-opacity=".15"/><stop offset=".35" stop-color="#fff" stop-opacity=".06"/><stop offset=".5" stop-color="#fff" stop-opacity=".16"/><stop offset=".65" stop-color="#fff" stop-opacity=".06"/><stop offset=".88" stop-color="#000" stop-opacity=".15"/><stop offset="1" stop-color="#000" stop-opacity=".75"/></linearGradient><linearGradient id="scv" x1="0" x2="0" y1="0" y2="1"><stop offset="0" stop-color="#000" stop-opacity=".35"/><stop offset=".1" stop-color="#000" stop-opacity="0"/><stop offset=".9" stop-color="#000" stop-opacity="0"/><stop offset="1" stop-color="#000" stop-opacity=".3"/></linearGradient></defs>
<rect x="25" y="9" width="54" height="78" fill="url(#scp)"/><rect x="25" y="9" width="54" height="78" fill="url(#scg)"/><rect x="25" y="9" width="54" height="78" fill="url(#scv)"/><path d="M47 87c1.500-5 3-8 5-8s3.500 3 5 8z" fill="#111" opacity=".8"/><path d="M40 62q5-3 10 0t10 0" stroke="#222" stroke-width="2" fill="none" opacity=".6"/></svg></div>
<div class="tl" style="top:228.5px">序列号<b>:1, </b>图像<b>:1</b></div>
<div class="th" style="top:252px"><svg width="106" height="96" viewBox="0 0 106 96"><defs><filter id="tb2" x="-5%" y="-5%" width="110%" height="110%"><feGaussianBlur stdDeviation="0.45"/></filter></defs>
<g filter="url(#tb2)">
<ellipse cx="51.500" cy="46.500" rx="33" ry="21" fill="#0b0b0b" stroke="#5a5a5a" stroke-width=".8"/>
<ellipse cx="51.500" cy="46.500" rx="28.500" ry="19.500" fill="#6c6c6c"/>
<ellipse cx="51.500" cy="46.500" rx="28" ry="19" fill="none" stroke="#cfcfcf" stroke-width="1.100" stroke-dasharray="4 3.500"/>
<ellipse cx="51.500" cy="46.500" rx="25" ry="16.500" fill="#000"/>
<path d="M43 60C45 54 59 54 61 60L63 66L41 66Z" fill="#808080"/>
<ellipse cx="57" cy="41" rx="13" ry="10" fill="#7e7e7e"/>
<path d="M27 52C31 60 40 65 48 64C50.500 62.500 50.500 59 50 56.500M77 52C73 60 64 65 56 64C53.500 62.500 53.500 59 54 56.500" fill="none" stroke="#ececec" stroke-width="1.600"/>
<circle cx="52" cy="56" r="3.400" fill="#f6f6f6"/><path d="M52 59v5M48.500 65.500l3.500-3.500 3.500 3.500" stroke="#e8e8e8" stroke-width="1.500" fill="none"/>
<circle cx="58.500" cy="54" r="2" fill="#d0d0d0"/>
<path d="M50 28.500h6" stroke="#eee" stroke-width="1.500"/>
<path d="M24 44v6M79 44v6" stroke="#e8e8e8" stroke-width="1.600"/>
<g fill="none" stroke="#7a7a7a" stroke-width=".8"><path d="M14 60Q52 80 92 59"/><path d="M17 67Q52 86 88 66"/><path d="M22 73Q52 93 84 73" stroke="#a0a0a0"/></g>
</g></svg></div>
<div class="tl" style="top:353.5px">序列号<b>:2, </b>图像<b>:112</b></div>
<div class="th" style="top:377px"><svg width="106" height="96" viewBox="0 0 106 96"><defs><filter id="tb3" x="-5%" y="-5%" width="110%" height="110%"><feGaussianBlur stdDeviation="0.45"/></filter></defs>
<g filter="url(#tb3)">
<ellipse cx="51.500" cy="46.500" rx="33" ry="21" fill="#0b0b0b" stroke="#5a5a5a" stroke-width=".8"/>
<ellipse cx="51.500" cy="46.500" rx="28.500" ry="19.500" fill="#6c6c6c"/>
<ellipse cx="51.500" cy="46.500" rx="28" ry="19" fill="none" stroke="#cfcfcf" stroke-width="1.100" stroke-dasharray="4 3.500"/>
<ellipse cx="51.500" cy="46.500" rx="25" ry="16.500" fill="#000"/>
<path d="M43 60C45 54 59 54 61 60L63 66L41 66Z" fill="#808080"/>
<ellipse cx="58" cy="41" rx="13" ry="9.5" fill="#f2f2f2"/><path d="M50 43l16-6" stroke="#666" stroke-width="1"/><path d="M56 47c4-1 8-2 12-5" stroke="#888" stroke-width=".8" fill="none"/>
<path d="M27 52C31 60 40 65 48 64C50.500 62.500 50.500 59 50 56.500M77 52C73 60 64 65 56 64C53.500 62.500 53.500 59 54 56.500" fill="none" stroke="#ececec" stroke-width="1.600"/>
<circle cx="52" cy="56" r="3.400" fill="#f6f6f6"/><path d="M52 59v5M48.500 65.500l3.500-3.500 3.500 3.500" stroke="#e8e8e8" stroke-width="1.500" fill="none"/>
<circle cx="58.500" cy="54" r="2" fill="#d0d0d0"/>
<path d="M50 28.500h6" stroke="#eee" stroke-width="1.500"/>
<path d="M24 44v6M79 44v6" stroke="#e8e8e8" stroke-width="1.600"/>
<g fill="none" stroke="#7a7a7a" stroke-width=".8"><path d="M14 60Q52 80 92 59"/><path d="M17 67Q52 86 88 66"/><path d="M22 73Q52 93 84 73" stroke="#a0a0a0"/></g>
</g></svg></div>
<div class="tl" style="top:478.5px">序列号<b>:3, </b>图像<b>:112</b></div>
<div class="th sel" style="top:502px"><svg width="106" height="96" viewBox="0 0 106 96"><defs><filter id="tb4" x="-5%" y="-5%" width="110%" height="110%"><feGaussianBlur stdDeviation="0.45"/></filter></defs>
<g filter="url(#tb4)">
<ellipse cx="51.500" cy="46.500" rx="33" ry="21" fill="#0b0b0b" stroke="#5a5a5a" stroke-width=".8"/>
<ellipse cx="51.500" cy="46.500" rx="28.500" ry="19.500" fill="#6c6c6c"/>
<ellipse cx="51.500" cy="46.500" rx="28" ry="19" fill="none" stroke="#cfcfcf" stroke-width="1.100" stroke-dasharray="4 3.500"/>
<ellipse cx="51.500" cy="46.500" rx="25" ry="16.500" fill="#000"/>
<path d="M43 60C45 54 59 54 61 60L63 66L41 66Z" fill="#808080"/>
<ellipse cx="58" cy="41" rx="13" ry="9.5" fill="#cfcfcf"/><path d="M52 44l14-5" stroke="#888" stroke-width=".8"/>
<path d="M27 52C31 60 40 65 48 64C50.500 62.500 50.500 59 50 56.500M77 52C73 60 64 65 56 64C53.500 62.500 53.500 59 54 56.500" fill="none" stroke="#ececec" stroke-width="1.600"/>
<circle cx="52" cy="56" r="3.400" fill="#f6f6f6"/><path d="M52 59v5M48.500 65.500l3.500-3.500 3.500 3.500" stroke="#e8e8e8" stroke-width="1.500" fill="none"/>
<circle cx="58.500" cy="54" r="2" fill="#d0d0d0"/>
<path d="M50 28.500h6" stroke="#eee" stroke-width="1.500"/>
<path d="M24 44v6M79 44v6" stroke="#e8e8e8" stroke-width="1.600"/>
<g fill="none" stroke="#7a7a7a" stroke-width=".8"><path d="M14 60Q52 80 92 59"/><path d="M17 67Q52 86 88 66"/><path d="M22 73Q52 93 84 73" stroke="#a0a0a0"/></g>
</g></svg></div>
<div class="tl" style="top:603.5px">序列号<b>:4, </b>图像<b>:193</b></div>
<div class="th" style="top:627px"><svg width="106" height="96" viewBox="0 0 106 96"><defs><filter id="tb5" x="-5%" y="-5%" width="110%" height="110%"><feGaussianBlur stdDeviation="0.45"/></filter></defs>
<g filter="url(#tb5)">
<ellipse cx="51.500" cy="46.500" rx="33" ry="21" fill="#0b0b0b" stroke="#5a5a5a" stroke-width=".8"/>
<ellipse cx="51.500" cy="46.500" rx="28.500" ry="19.500" fill="#6c6c6c"/>
<ellipse cx="51.500" cy="46.500" rx="28" ry="19" fill="none" stroke="#cfcfcf" stroke-width="1.100" stroke-dasharray="4 3.500"/>
<ellipse cx="51.500" cy="46.500" rx="25" ry="16.500" fill="#000"/>
<path d="M43 60C45 54 59 54 61 60L63 66L41 66Z" fill="#808080"/>
<ellipse cx="58" cy="41" rx="12.5" ry="9.5" fill="#b4b4b4"/>
<path d="M27 52C31 60 40 65 48 64C50.500 62.500 50.500 59 50 56.500M77 52C73 60 64 65 56 64C53.500 62.500 53.500 59 54 56.500" fill="none" stroke="#ececec" stroke-width="1.600"/>
<circle cx="52" cy="56" r="3.400" fill="#f6f6f6"/><path d="M52 59v5M48.500 65.500l3.500-3.500 3.500 3.500" stroke="#e8e8e8" stroke-width="1.500" fill="none"/>
<circle cx="58.500" cy="54" r="2" fill="#d0d0d0"/>
<path d="M50 28.500h6" stroke="#eee" stroke-width="1.500"/>
<path d="M24 44v6M79 44v6" stroke="#e8e8e8" stroke-width="1.600"/>
<g fill="none" stroke="#7a7a7a" stroke-width=".8"><path d="M14 60Q52 80 92 59"/><path d="M17 67Q52 86 88 66"/><path d="M22 73Q52 93 84 73" stroke="#a0a0a0"/></g>
</g></svg></div>
<div class="tl" style="top:728.5px">序列号<b>:5, </b>图像<b>:112</b></div>
<div class="th" style="top:752px"><svg width="106" height="96" viewBox="0 0 106 96"><defs><filter id="tb6" x="-5%" y="-5%" width="110%" height="110%"><feGaussianBlur stdDeviation="0.45"/></filter></defs>
<g filter="url(#tb6)">
<ellipse cx="51.500" cy="46.500" rx="33" ry="21" fill="#0b0b0b" stroke="#5a5a5a" stroke-width=".8"/>
<ellipse cx="51.500" cy="46.500" rx="28.500" ry="19.500" fill="#6c6c6c"/>
<ellipse cx="51.500" cy="46.500" rx="28" ry="19" fill="none" stroke="#cfcfcf" stroke-width="1.100" stroke-dasharray="4 3.500"/>
<ellipse cx="51.500" cy="46.500" rx="25" ry="16.500" fill="#000"/>
<path d="M43 60C45 54 59 54 61 60L63 66L41 66Z" fill="#808080"/>
<ellipse cx="58" cy="41" rx="12.5" ry="9.5" fill="#b4b4b4"/>
<path d="M27 52C31 60 40 65 48 64C50.500 62.500 50.500 59 50 56.500M77 52C73 60 64 65 56 64C53.500 62.500 53.500 59 54 56.500" fill="none" stroke="#ececec" stroke-width="1.600"/>
<circle cx="52" cy="56" r="3.400" fill="#f6f6f6"/><path d="M52 59v5M48.500 65.500l3.500-3.500 3.500 3.500" stroke="#e8e8e8" stroke-width="1.500" fill="none"/>
<circle cx="58.500" cy="54" r="2" fill="#d0d0d0"/>
<path d="M50 28.500h6" stroke="#eee" stroke-width="1.500"/>
<path d="M24 44v6M79 44v6" stroke="#e8e8e8" stroke-width="1.600"/>
<g fill="none" stroke="#7a7a7a" stroke-width=".8"><path d="M14 60Q52 80 92 59"/><path d="M17 67Q52 86 88 66"/><path d="M22 73Q52 93 84 73" stroke="#a0a0a0"/></g>
</g></svg></div>
<div class="tl" style="top:853.5px">序列号<b>:6, </b>图像<b>:112</b></div>
</div>
<div class="abs" id="sb"></div>
<div class="abs" style="left:142px;top:113px;width:1px;height:785px;background:#868686"></div>
<svg class="abs" style="left:130.5px;top:119.5px" width="8" height="4.500" viewBox="0 0 9 5"><path d="M0 5L4.5 0.5L9 5z" fill="#505050"/></svg>
<div class="abs" style="left:126px;top:131px;width:15px;height:352px;border:1px solid #a6a6a6;border-radius:2px;background:linear-gradient(90deg,#f2f2f2,#e0e0e0 45%,#c9c9c9)"></div>
<div class="abs" style="left:130px;top:303px;width:7px;height:1px;background:#666;box-shadow:0 2px 0 #666,0 4px 0 #666,0 6px 0 #666"></div>
<svg class="abs" style="left:130.5px;top:887px" width="8" height="4.500" viewBox="0 0 9 5"><path d="M0 0L4.5 4.5L9 0z" fill="#505050"/></svg>

<div class="abs" id="tabbar"></div>
<div class="abs" style="left:143px;top:117px;width:1658px;height:5px;background:#ced4ea"></div>
<div class="abs" id="tab2"></div>
<svg class="abs" style="left:152px;top:94px" width="16" height="16" viewBox="0 0 16 16"><rect width="16" height="16" fill="#fff"/><ellipse cx="8" cy="13" rx="5" ry="3" fill="#f0609c"/><path d="M3.5 8c0-5 2-6.5 4.5-6.5s4.500 1.500 4.500 6.500c0 3-1 5-1.500 5.500h-6c-.5-.5-1.500-2.500-1.500-5.500z" fill="#6b3a2a"/><ellipse cx="8" cy="7.500" rx="3" ry="3.800" fill="#fbdcc8"/><circle cx="6.800" cy="7.300" r=".5" fill="#333"/><circle cx="9.200" cy="7.300" r=".5" fill="#333"/><path d="M7 9.500q1 .8 2 0" stroke="#d44" stroke-width=".6" fill="none"/></svg>
<div class="abs" id="tab1" style="left:171px;top:89px;background:none">Andy(20180531)</div>
<svg class="abs" style="left:328px;top:94px" width="16" height="16" viewBox="0 0 16 16"><rect width="16" height="16" fill="#fff"/><path d="M2 5l6-2.500 6 1.500-6 3z" fill="#111"/><path d="M2 5v2l6 3 6-4" stroke="#111" stroke-width="1.200" fill="none"/><path d="M2 8.500v2l6 3 6-4" stroke="#111" stroke-width="1.200" fill="none"/><path d="M2 7l6 3M2 10.500l6 3" stroke="#111" stroke-width="1"/></svg>
<div class="abs" style="left:346px;top:89px;font-size:19.7px;line-height:29px;color:#111;white-space:pre;word-spacing:2.7px">Andy : 4</div>
<svg class="abs" style="left:438px;top:99px" width="9" height="9" viewBox="0 0 9 9"><path d="M1 1l7 7M8 1l-7 7" stroke="#555" stroke-width="1.300"/></svg>
<svg class="abs" style="left:1765px;top:96px" width="8" height="11" viewBox="0 0 8 11"><path d="M6.500 1L1.500 5.500L6.500 10z" fill="none" stroke="#fff" stroke-width="1"/></svg>
<svg class="abs" style="left:1781px;top:96px" width="8" height="11" viewBox="0 0 8 11"><path d="M1.500 1L6.500 5.500L1.500 10z" fill="none" stroke="#fff" stroke-width="1"/></svg>

<div class="abs" style="left:148px;top:121px;width:1649px;height:772px;background:#a4a6ad"></div><div class="abs" style="left:149px;top:122px;width:1648px;height:771px;background:#fff"></div>
<div class="abs" style="left:149px;top:122px;width:1646px;height:769px;background:#6e6e6e"></div>
<div class="pan" style="left:150px;top:123px;width:822px;height:384px">
<svg class="abs" style="left:0;top:0" width="820" height="383" viewBox="151 124 820 383">
<defs>
<filter id="b1" x="-10%" y="-10%" width="120%" height="120%"><feGaussianBlur stdDeviation="0.7"/></filter>
<filter id="b2" x="-10%" y="-10%" width="120%" height="120%"><feGaussianBlur stdDeviation="1.3"/></filter>
<filter id="nz" x="0" y="0" width="100%" height="100%"><feTurbulence type="fractalNoise" baseFrequency="0.55" numOctaves="2" seed="4" result="n"/><feColorMatrix in="n" type="matrix" values="0 0 0 0 0  0 0 0 0 0  0 0 0 0 0  1.6 0 0 0 -0.55" result="a"/><feComposite in="a" in2="SourceAlpha" operator="in"/></filter>
</defs>
<!-- skin line -->
<path d="M416.500 316C417 282 440 250 471 234.500C495 216 520 206 544 205.500C572 205 600 209 622.500 216C655 226 676 242 684 256C700 272 709.500 295 709 316C709 340 705 360 695.500 374C686 388 668 394 653 395.500C625 398 596 398 574 396.700C569 392 566 386 562 383C557 386 554 391 550 393.700C522 395 495 393 471 389C452 384 437 372 428.500 359C420 347 416.500 332 416.500 316Z" fill="#020202" stroke="#9c9c9c" stroke-width="0.8"/>
<g filter="url(#b1)">
<!-- abdominal wall -->
<path d="M437.500 312C437.500 270 490 236.500 564 236.500C638 236.500 691 270 691 312C691 338 683 358 668 368C655 374 640 376 628 374L626 368C645 368 658 362 664 352C672 340 676 325 676 310C676 274 630 241.500 564 241.500C498 241.500 452 274 452 310C452 325 456 340 464 352C470 362 482 368 500 368L498 374C486 376 472 374 460 368C445 358 437.500 338 437.500 312Z" fill="#757575"/>
<path d="M443 312C443 276 492 240 564 240M685 312C685 276 636 240 564 240" stroke="#2a2a2a" stroke-width="0.8" fill="none" opacity="0.7"/>
<!-- psoas / perivertebral -->
<path d="M521 347L535 318C545 312 575 312 586 318L600 347L580 352L540 352Z" fill="#6e6e6e"/>
<!-- back muscles -->
<path d="M491 366C492 355 505 349 523 348C540 347 552 350 556 358L558 372C558 380 556 386 552 389C540 391 520 391 506 388C496 384 490 376 491 366Z" fill="#858585"/>
<path d="M564 372L566 358C570 350 582 347 598 348C614 349 624 355 623 366C622 376 616 384 606 388C594 391 578 391 570 389C566 386 564 380 564 372Z" fill="#858585"/>
<path d="M505 362l8 3M515 380l-3-7M540 380l2-6M590 380l2-6M610 362l-6 4M600 376l4-4" stroke="#2e2e2e" stroke-width="1.100" fill="none"/>
<!-- bowel -->
<g fill="#8b8b8b">
<ellipse cx="521" cy="257" rx="13" ry="10"/><ellipse cx="514" cy="268" rx="8" ry="8"/>
<path d="M526 256C530 248 548 246 562 246C574 246 577 252 574 258C570 263 556 263 546 262C536 262 526 264 526 256Z"/>
<ellipse cx="556" cy="249" rx="20" ry="5"/>
<path d="M574 246C584 240 602 242 612 250C616 256 612 260 604 259C594 256 582 256 576 254Z"/>
<ellipse cx="509" cy="297" rx="12" ry="14"/><ellipse cx="503" cy="313" rx="7" ry="6"/><ellipse cx="516" cy="282" rx="6" ry="6"/>
<ellipse cx="638" cy="291" rx="6" ry="5"/><ellipse cx="657.500" cy="308" rx="7" ry="12"/>
<ellipse cx="602.500" cy="313" rx="6.500" ry="6"/><ellipse cx="616" cy="307.500" rx="4.700" ry="4.500"/><ellipse cx="638.600" cy="308.400" rx="3.400" ry="3.400"/>
</g>
<ellipse cx="642" cy="272" rx="15" ry="12" fill="#858585"/><ellipse cx="644" cy="274" rx="8" ry="6" fill="#2c2c2c"/><ellipse cx="628" cy="262" rx="8" ry="6" fill="#858585"/>
<ellipse cx="628" cy="309.400" rx="5.200" ry="4.800" fill="#9a9a9a"/><ellipse cx="628" cy="309.400" rx="2.600" ry="2.200" fill="#111"/>
<!-- left mottled colon -->
<ellipse cx="489" cy="272" rx="19" ry="19" fill="#4a4a4a"/><ellipse cx="472" cy="308" rx="10" ry="20" fill="#505050"/>
<g fill="#141414"><circle cx="482" cy="264" r="3"/><circle cx="494" cy="270" r="3.500"/><circle cx="486" cy="280" r="3"/><circle cx="498" cy="258" r="2.500"/><circle cx="478" cy="275" r="2"/><circle cx="470" cy="296" r="3"/><circle cx="474" cy="312" r="3.500"/><circle cx="470" cy="322" r="2.500"/><circle cx="496" cy="284" r="2"/></g>
<!-- vessels -->
<ellipse cx="550.400" cy="295.200" rx="10" ry="7" fill="#c4c4c4"/><circle cx="569.400" cy="293.300" r="7" fill="#d4d4d4"/>
<g fill="#e0e0e0"><circle cx="547.500" cy="268" r="1.800"/><circle cx="556" cy="279" r="2"/><circle cx="561" cy="280" r="1.500"/><ellipse cx="576" cy="275" rx="5" ry="2.500" transform="rotate(-20 576 275)"/><circle cx="586" cy="260" r="1.600"/><circle cx="578" cy="302" r="2.200"/><circle cx="585.500" cy="301" r="2.200"/><circle cx="577" cy="288" r="2"/><ellipse cx="502.500" cy="329" rx="2.800" ry="2"/><circle cx="591" cy="311" r="1.600"/></g>
<!-- kidney -->
<ellipse cx="626.300" cy="337" rx="24" ry="19.500" transform="rotate(22 626.300 337)" fill="#e9e9e9"/>
<!-- vertebra -->
<ellipse cx="559" cy="319" rx="22" ry="16" fill="#fafafa"/>
<ellipse cx="559" cy="320" rx="12" ry="8.500" fill="#8e8e8e"/>
<path d="M547 346.500C547 342 551 342 554 344C556 346 560 346 562 344C565 342 569 342 569 346.500C569 350 564 349 561 351C560 358 560 366 559 372C558 374 556 374 555.500 372C555 366 555 358 555 351C552 349 547 350 547 346.500Z" fill="#fdfdfd"/>
</g>
<ellipse cx="626.300" cy="337" rx="22" ry="18" transform="rotate(22 626.300 337)" fill="#000" filter="url(#nz)" opacity="0.35"/>
<path d="M437.500 312C437.500 270 490 236.500 564 236.500C638 236.500 691 270 691 312C691 338 683 358 668 368L606 388L506 388L460 368C445 358 437.500 338 437.500 312Z" fill="#000" filter="url(#nz)" opacity="0.22"/>
<!-- table -->
<g fill="none" stroke="#fff" filter="url(#b1)">
<path d="M388.500 366.500C420 378 450 390 480 395.500C510 400 540 403 559 404.500C580 405 600 404 620 402C640 400 660 397 668 395C700 388 730 378 745.500 368.500" stroke-width="1.300" stroke="#ececec"/>
<path d="M399 396C455 412 512 422.500 562 422.500C616 422.500 680 416 730 405.500" stroke-width="1" stroke="#d6d6d6"/>
<path d="M412 419C455 440 510 459 562 459C616 459 672 448 713 433" stroke-width="1.800"/>
</g>
<!-- crosshair -->
<g stroke-width="1" fill="none">
<path d="M561.500 215V265M561.500 365V415M460 315.500H510M610 315.500H660" stroke="#fff"/>
<path d="M561.500 215V265M561.500 365V415M460 315.500H510M610 315.500H660" stroke="#e01010" stroke-dasharray="3 3"/>
</g>
</svg>

<div class="tlb">ANDY-F-055Y
20180531
2018-05-31
09:45:32.32</div>
<div class="trb" style="right:1px">Alexion
13936
Srs:<span class="cj">橫截面</span>
Img:224</div>
<div class="cm" style="top:293px">24 cm</div>
<svg class="abs" style="left:0;top:0" width="820" height="382" fill="#cfcfcf"><rect x="801" y="95" width="1" height="193"/><rect x="793" y="95" width="8" height="1"/><rect x="797" y="99" width="4" height="1"/><rect x="793" y="103" width="8" height="1"/><rect x="797" y="107" width="4" height="1"/><rect x="793" y="111" width="8" height="1"/><rect x="797" y="115" width="4" height="1"/><rect x="793" y="119" width="8" height="1"/><rect x="797" y="123" width="4" height="1"/><rect x="793" y="127" width="8" height="1"/><rect x="797" y="131" width="4" height="1"/><rect x="793" y="135" width="8" height="1"/><rect x="797" y="139" width="4" height="1"/><rect x="793" y="143" width="8" height="1"/><rect x="797" y="147" width="4" height="1"/><rect x="793" y="151" width="8" height="1"/><rect x="797" y="155" width="4" height="1"/><rect x="793" y="159" width="8" height="1"/><rect x="797" y="163" width="4" height="1"/><rect x="793" y="167" width="8" height="1"/><rect x="797" y="171" width="4" height="1"/><rect x="793" y="175" width="8" height="1"/><rect x="797" y="179" width="4" height="1"/><rect x="793" y="183" width="8" height="1"/><rect x="797" y="187" width="4" height="1"/><rect x="793" y="191" width="8" height="1"/><rect x="797" y="195" width="4" height="1"/><rect x="793" y="199" width="8" height="1"/><rect x="797" y="203" width="4" height="1"/><rect x="793" y="207" width="8" height="1"/><rect x="797" y="211" width="4" height="1"/><rect x="793" y="215" width="8" height="1"/><rect x="797" y="219" width="4" height="1"/><rect x="793" y="223" width="8" height="1"/><rect x="797" y="227" width="4" height="1"/><rect x="793" y="231" width="8" height="1"/><rect x="797" y="235" width="4" height="1"/><rect x="793" y="239" width="8" height="1"/><rect x="797" y="243" width="4" height="1"/><rect x="793" y="247" width="8" height="1"/><rect x="797" y="251" width="4" height="1"/><rect x="793" y="255" width="8" height="1"/><rect x="797" y="259" width="4" height="1"/><rect x="793" y="263" width="8" height="1"/><rect x="797" y="267" width="4" height="1"/><rect x="793" y="271" width="8" height="1"/><rect x="797" y="275" width="4" height="1"/><rect x="793" y="279" width="8" height="1"/><rect x="797" y="283" width="4" height="1"/><rect x="793" y="287" width="8" height="1"/></svg>
<div class="brb" style="right:1px">L:60
W:300</div>
</div>
<div class="pan" style="left:972px;top:123px;width:823px;height:384px">
<svg class="abs" style="left:287px;top:16px" width="280" height="350" viewBox="0 0 738 923">
<defs>
<filter id="c2b" x="-5%" y="-5%" width="110%" height="110%"><feGaussianBlur stdDeviation="1.700"/></filter>
<filter id="c2bb" x="-5%" y="-5%" width="110%" height="110%"><feGaussianBlur stdDeviation="3.500"/></filter>
<filter id="c2n" x="0" y="0" width="100%" height="100%"><feTurbulence type="fractalNoise" baseFrequency="0.25" numOctaves="2" seed="7" result="n"/><feColorMatrix in="n" type="matrix" values="0 0 0 0 0  0 0 0 0 0  0 0 0 0 0  1.700 0 0 0 -0.600" result="a"/><feComposite in="a" in2="SourceAlpha" operator="in"/></filter>
<clipPath id="c2c"><rect x="20" y="15" width="700" height="886"/></clipPath>
</defs>
<g clip-path="url(#c2c)">
<g filter="url(#c2b)">
<path d="M63 15C45 80 36 120 35.700 158C30 220 28 260 28 308C28 370 32 420 38 458C45 520 52 560 56 598C62 640 66 670 73 698C90 735 115 755 128 773C134 800 134 850 133 898" fill="none" stroke="#8a8a8a" stroke-width="2"/>
<path d="M68 148C80 180 92 210 98 238C106 280 110 320 113 358C117 400 120 430 121 458C124 510 128 560 133 598C140 660 150 710 158 748C168 780 178 805 188 823C195 850 200 875 203 905" fill="none" stroke="#747474" stroke-width="13"/>
<path d="M62 150C66 115 85 95 110 72L134 100C122 130 108 160 100 200C88 190 70 170 62 150Z" fill="#808080"/>
<path d="M112 18C110 40 116 50 122 66C126 85 122 100 116 118" fill="none" stroke="#f4f4f4" stroke-width="7"/><path d="M104 22C108 30 114 32 122 28" fill="none" stroke="#ddd" stroke-width="4"/>
<path d="M133 898L135 800C140 790 150 790 158 800L200 905Z" fill="#2a2a2a"/>
<path d="M440 10L545 10C548 100 545 200 540 308C528 370 512 420 506 458C506 500 510 530 514 548C524 580 534 600 543 613C553 640 562 670 568 698C574 740 578 770 580 800L584 905L520 905C505 800 470 720 440 640C410 560 395 500 415 380C440 260 455 150 440 10Z" fill="#848484"/>
<path d="M505 15C510 100 505 200 488 300" fill="none" stroke="#5e5e5e" stroke-width="6"/><path d="M520 30C526 80 526 140 518 190" fill="none" stroke="#3a3a3a" stroke-width="9"/><path d="M470 120C478 200 470 290 452 360" fill="none" stroke="#6a6a6a" stroke-width="5"/>
<path d="M553 15C556 100 553 200 548 300C545 380 544 430 546 458" fill="none" stroke="#8c8c8c" stroke-width="5"/>
<path d="M540 458C542 500 546 530 548 548C554 590 560 620 564 648C572 680 578 700 580 718C583 750 584 780 584 798L584 900" fill="none" stroke="#787878" stroke-width="7"/>
<path d="M160 750C200 742 260 738 300 735C340 730 400 728 440 735C470 745 500 770 513 800L530 905L200 905C190 860 175 800 160 750Z" fill="#848484"/>
<path d="M270 760C285 735 330 722 380 725C430 728 468 745 478 775C470 800 452 790 438 800C446 830 470 850 478 868L430 868C420 840 410 815 390 805C370 790 340 770 310 772C295 775 280 772 270 760Z" fill="#080808"/>
<ellipse cx="335" cy="838" rx="87" ry="40" fill="#9e9e9e" transform="rotate(6 335 838)"/><ellipse cx="300" cy="838" rx="50" ry="34" fill="#bcbcbc" transform="rotate(6 300 838)"/>
<ellipse cx="338" cy="788" rx="38" ry="17" fill="#9a9a9a" transform="rotate(14 338 788)"/><circle cx="430" cy="808" r="16" fill="#969696"/>
<path d="M463 770C480 790 500 830 513 898L470 898C470 860 465 810 463 770Z" fill="#8e8e8e"/>
<path d="M143 15L343 15C350 45 330 70 290 72C250 66 200 75 165 62C150 50 145 30 143 15Z" fill="#cfcfcf"/><path d="M225 15L305 15C305 42 265 50 240 40Z" fill="#ebebeb"/><path d="M150 20C160 50 200 62 250 58" stroke="#e0e0e0" stroke-width="8" fill="none"/>
<path d="M121 148C122 118 130 104 150 98C180 86 200 82 213 83C250 80 290 90 313 103C330 112 336 125 335 140C336 165 336 185 333 198C320 210 305 208 293 208C280 200 265 200 253 203C240 200 225 205 213 208C200 212 188 214 178 218C165 228 150 240 138 248C126 236 121 222 121 208Z" fill="#a9a9a9"/>
<path d="M200 150c15 5 30 0 45-8M270 135c0 20-5 35-12 50M290 120c5 20 5 40 0 60" stroke="#6a6a6a" stroke-width="4" fill="none"/><path d="M225 120l25-6" stroke="#d4d4d4" stroke-width="5"/>
<path d="M143 235C150 222 175 218 195 222C205 240 213 260 213 288C215 310 213 335 205 348C190 350 180 340 178 320C176 300 165 290 152 280C142 268 140 250 143 235Z" fill="#8c8c8c"/>
<ellipse cx="169" cy="234" rx="8.500" ry="17" fill="#030303" transform="rotate(8 169 234)"/>
<path d="M213 215C240 205 270 205 293 212C298 240 296 280 290 308C270 312 250 310 235 300C222 280 215 250 213 215Z" fill="#949494"/>
<path d="M262 228C270 240 274 270 270 308" stroke="#c9c9c9" stroke-width="16" fill="none" stroke-linecap="round"/><path d="M236 260C238 290 236 320 230 350" stroke="#a8a8a8" stroke-width="9" fill="none"/>
<path d="M343 105C345 180 335 250 318 318" stroke="#6c6c6c" stroke-width="14" fill="none"/>
<path d="M313 318C305 370 290 420 270 465" stroke="#b6b6b6" stroke-width="24" fill="none" stroke-linecap="round"/>
<path d="M240 360C236 400 232 440 230 480M218 420C220 470 216 520 222 570" stroke="#8a8a8a" stroke-width="7" fill="none"/>
<circle cx="258" cy="553" r="18" fill="#c2c2c2"/><ellipse cx="291" cy="603" rx="12" ry="20" fill="#b4b4b4"/><circle cx="261" cy="660" r="8" fill="#aaa"/>
<path d="M125 470C140 460 170 465 178 480C190 500 200 540 203 580C205 620 200 650 190 660C170 665 150 650 140 620C132 580 128 520 125 470Z" fill="#7e7e7e"/>
<g fill="#050505"><path d="M150 540l22-6 8 18-20 10zM140 580l28-8 12 30-25 14zM170 560l18-8 8 16-16 10zM138 650l40-4 6 40-30 6zM168 700l22 0 4 40-20 4z"/><ellipse cx="160" cy="500" rx="10" ry="8"/></g>
<circle cx="170" cy="468" r="14" fill="#a2a2a2"/><circle cx="150" cy="442" r="9" fill="#999"/>
<path d="M190 700C220 690 260 680 293 690C300 720 280 750 250 765C220 772 195 760 188 740Z" fill="#7c7c7c"/>
<g fill="#040404"><ellipse cx="265" cy="705" rx="10" ry="8"/><ellipse cx="232" cy="735" rx="13" ry="10"/><ellipse cx="205" cy="750" rx="9" ry="13"/><ellipse cx="250" cy="750" rx="8" ry="6"/><circle cx="293" cy="680" r="6"/></g>
<circle cx="258" cy="660" r="7" fill="#9a9a9a"/>
<path d="M440 20C442 120 438 200 426 258C418 300 412 330 410 358C402 400 394 430 386 473C380 510 380 530 381 548C384 580 390 600 398 613C410 635 424 648 438 658C456 674 474 690 488 703C508 724 522 745 533 768C542 790 548 810 552 840" fill="none" stroke="#7a7a7a" stroke-width="21"/>
<path d="M428 258C420 300 414 330 412 358C404 400 396 430 388 473C382 510 382 530 383 548C386 580 392 600 400 613C412 635 426 648 440 658" fill="none" stroke="#3c3c3c" stroke-width="3" transform="translate(-11 0)"/>
<path d="M393.0 -27.5 L393.0 -24.5 L393.0 -21.5 L393.0 -18.5 L393.0 -15.5 L393.0 -10.0 L393.0 -4.0 L393.0 2.0 L393.0 8.0 L393.0 14.0 L393.0 20.0 L393.0 26.0 L393.0 32.0 L393.0 38.0 L393.0 44.0 L393.0 50.0 L393.1 56.0 L393.1 62.0 L393.2 68.0 L393.2 74.0 L393.3 80.0 L393.4 86.0 L393.5 92.0 L393.6 98.0 L393.6 104.0 L393.7 110.0 L393.7 116.0 L393.6 122.0 L393.4 128.0 L393.2 134.0 L392.9 140.0 L392.5 146.0 L392.1 152.0 L391.6 158.0 L391.1 164.0 L390.6 170.0 L390.0 176.0 L389.3 181.9 L388.6 187.9 L387.8 193.9 L386.9 199.8 L385.9 205.7 L384.9 211.6 L383.8 217.5 L382.7 223.4 L381.6 229.3 L380.5 235.2 L379.5 241.2 L378.6 247.1 L377.6 253.1 L376.8 259.0 L376.0 265.0 L375.2 271.0 L374.4 277.0 L373.7 283.0 L373.0 289.0 L372.1 295.0 L371.2 300.9 L370.1 306.9 L369.0 312.8 L367.7 318.6 L366.3 324.5 L364.8 330.3 L363.2 336.1 L361.5 341.8 L359.8 347.6 L358.2 353.4 L356.5 359.2 L354.8 364.9 L353.1 370.7 L351.5 376.5 L350.0 382.3 L348.5 388.2 L347.0 394.0 L345.6 399.9 L344.2 405.8 L342.9 411.7 L341.7 417.6 L340.4 423.5 L339.1 429.4 L337.9 435.3 L336.7 441.2 L335.5 447.2 L334.4 453.1 L333.4 459.1 L332.5 465.0 L331.6 471.0 L330.8 477.0 L330.0 483.0 L329.3 489.0 L328.8 495.0 L328.4 501.0 L328.1 507.0 L327.8 513.0 L327.7 519.0 L327.8 525.0 L327.9 531.0 L328.1 537.0 L328.4 543.0 L328.9 549.0 L329.4 555.0 L330.0 561.0 L330.7 567.0 L331.6 573.0 L332.5 579.0 L333.5 585.0 L334.7 590.9 L336.1 596.8 L337.8 602.6 L339.7 608.3 L341.7 613.9 L344.0 619.4 L346.6 624.8 L349.3 630.2 L352.2 635.4 L355.2 640.7 L358.5 645.7 L361.9 650.5 L365.7 655.0 L369.6 659.3 L373.9 663.4 L378.4 667.2 L383.1 670.9 L388.1 674.2 L393.2 677.5 L398.3 680.8 L403.4 684.1 L408.5 687.4 L413.5 690.8 L418.5 694.2 L423.4 697.7 L428.3 701.3 L433.1 705.0 L437.8 708.8 L442.5 712.6 L447.1 716.5 L451.7 720.5 L456.3 724.5 L460.9 728.5 L465.4 732.5 L469.8 736.6 L474.0 740.9 L478.2 745.2 L482.2 749.7 L486.1 754.3 L489.8 759.0 L493.4 763.8 L497.0 768.6 L500.5 773.5 L504.0 778.4 L507.4 783.4 L510.6 788.4 L513.7 793.6 L516.6 798.8 L519.4 804.2 L522.0 809.6 L524.4 815.1 L526.7 820.7 L528.9 826.4 L531.0 832.1 L532.9 837.8 L534.6 843.6 L536.1 849.4 L537.4 855.2 L538.6 861.1 L539.5 867.0 L540.3 873.0 L540.9 879.0 L541.5 885.0 L542.1 891.0 L542.7 897.0 L543.3 903.0 L543.7 907.0 L544.0 910.0 L544.3 913.0 L544.6 916.0" fill="none" stroke="#8a8a8a" stroke-width="58"/>
<g transform="translate(393.0 15.7) rotate(0.0)"><rect x="-32.2" y="-25.2" width="64.3" height="50.5" rx="5" fill="#f3f3f3"/><rect x="-27.2" y="-20.2" width="54.3" height="40.5" rx="4" fill="#d9d9d9"/><path d="M-16.1 -17.2V17.2M0 -17.2V17.2M16.1 -17.2V17.2" stroke="#b4b4b4" stroke-width="4"/></g>
<g transform="translate(393.2 74.9) rotate(-0.7)"><rect x="-32.7" y="-26.0" width="65.4" height="51.9" rx="5" fill="#f3f3f3"/><rect x="-27.7" y="-21.0" width="55.4" height="41.9" rx="4" fill="#d9d9d9"/><path d="M-16.4 -18.0V18.0M0 -18.0V18.0M16.4 -18.0V18.0" stroke="#b4b4b4" stroke-width="4"/></g>
<g transform="translate(393.1 135.6) rotate(2.6)"><rect x="-33.3" y="-26.7" width="66.6" height="53.4" rx="5" fill="#f3f3f3"/><rect x="-28.3" y="-21.7" width="56.6" height="43.4" rx="4" fill="#d9d9d9"/><path d="M-16.6 -18.7V18.7M0 -18.7V18.7M16.6 -18.7V18.7" stroke="#b4b4b4" stroke-width="4"/></g>
<g transform="translate(387.2 197.4) rotate(8.5)"><rect x="-33.9" y="-27.5" width="67.7" height="55.0" rx="5" fill="#f3f3f3"/><rect x="-28.9" y="-22.5" width="57.7" height="45.0" rx="4" fill="#d9d9d9"/><path d="M-16.9 -19.5V19.5M0 -19.5V19.5M16.9 -19.5V19.5" stroke="#b4b4b4" stroke-width="4"/></g>
<g transform="translate(376.6 260.3) rotate(8.0)"><rect x="-34.4" y="-28.3" width="68.9" height="56.5" rx="5" fill="#f3f3f3"/><rect x="-29.4" y="-23.3" width="58.9" height="46.5" rx="4" fill="#d9d9d9"/><path d="M-17.2 -20.3V20.3M0 -20.3V20.3M17.2 -20.3V20.3" stroke="#b4b4b4" stroke-width="4"/></g>
<g transform="translate(366.3 324.7) rotate(13.9)"><rect x="-35.1" y="-29.1" width="70.1" height="58.1" rx="5" fill="#f3f3f3"/><rect x="-30.1" y="-24.1" width="60.1" height="48.1" rx="4" fill="#d9d9d9"/><path d="M-17.5 -21.1V21.1M0 -21.1V21.1M17.5 -21.1V21.1" stroke="#b4b4b4" stroke-width="4"/></g>
<g transform="translate(348.2 389.2) rotate(14.1)"><rect x="-35.7" y="-29.9" width="71.3" height="59.8" rx="5" fill="#f3f3f3"/><rect x="-30.7" y="-24.9" width="61.3" height="49.8" rx="4" fill="#d9d9d9"/><path d="M-17.8 -21.9V21.9M0 -21.9V21.9M17.8 -21.9V21.9" stroke="#b4b4b4" stroke-width="4"/></g>
<g transform="translate(333.9 456.3) rotate(9.7)"><rect x="-36.3" y="-30.7" width="72.6" height="61.5" rx="5" fill="#f3f3f3"/><rect x="-31.3" y="-25.7" width="62.6" height="51.5" rx="4" fill="#d9d9d9"/><path d="M-18.2 -22.7V22.7M0 -22.7V22.7M18.2 -22.7V22.7" stroke="#b4b4b4" stroke-width="4"/></g>
<g transform="translate(327.8 526.3) rotate(-0.9)"><rect x="-37.0" y="-31.6" width="73.9" height="63.2" rx="5" fill="#f3f3f3"/><rect x="-32.0" y="-26.6" width="63.9" height="53.2" rx="4" fill="#d9d9d9"/><path d="M-18.5 -23.6V23.6M0 -23.6V23.6M18.5 -23.6V23.6" stroke="#b4b4b4" stroke-width="4"/></g>
<g transform="translate(336.4 597.8) rotate(-15.2)"><rect x="-37.6" y="-32.5" width="75.3" height="65.0" rx="5" fill="#f3f3f3"/><rect x="-32.6" y="-27.5" width="65.3" height="55.0" rx="4" fill="#d9d9d9"/><path d="M-18.8 -24.5V24.5M0 -24.5V24.5M18.8 -24.5V24.5" stroke="#b4b4b4" stroke-width="4"/></g>
<g transform="translate(371.0 660.7) rotate(-44.9)"><rect x="-36.7" y="-32.1" width="73.4" height="64.1" rx="5" fill="#f3f3f3"/><rect x="-31.7" y="-27.1" width="63.4" height="54.1" rx="4" fill="#d9d9d9"/><path d="M-18.4 -24.1V24.1M0 -24.1V24.1M18.4 -24.1V24.1" stroke="#b4b4b4" stroke-width="4"/></g>
<g transform="translate(428.1 701.2) rotate(-53.1)"><rect x="-33.9" y="-30.0" width="67.9" height="60.1" rx="5" fill="#f3f3f3"/><rect x="-28.9" y="-25.0" width="57.9" height="50.1" rx="4" fill="#ececec"/><path d="M-17.0 -22.0V22.0M0 -22.0V22.0M17.0 -22.0V22.0" stroke="#b4b4b4" stroke-width="4"/></g>
<g transform="translate(477.8 744.8) rotate(-42.9)"><rect x="-31.3" y="-28.1" width="62.7" height="56.2" rx="5" fill="#f3f3f3"/><rect x="-26.3" y="-23.1" width="52.7" height="46.2" rx="4" fill="#ececec"/><path d="M-15.7 -20.1V20.1M0 -20.1V20.1M15.7 -20.1V20.1" stroke="#b4b4b4" stroke-width="4"/></g>
<g transform="translate(513.1 792.6) rotate(-30.6)"><rect x="-29.0" y="-26.4" width="58.0" height="52.8" rx="5" fill="#f3f3f3"/><rect x="-24.0" y="-21.4" width="48.0" height="42.8" rx="4" fill="#ececec"/><path d="M-14.5 -18.4V18.4M0 -18.4V18.4M14.5 -18.4V18.4" stroke="#b4b4b4" stroke-width="4"/></g>
<g transform="translate(534.8 844.2) rotate(-15.5)"><rect x="-26.8" y="-24.8" width="53.6" height="49.5" rx="5" fill="#f3f3f3"/><rect x="-21.8" y="-19.8" width="43.6" height="39.5" rx="4" fill="#ececec"/><path d="M-13.4 -16.8V16.8M0 -16.8V16.8M13.4 -16.8V16.8" stroke="#b4b4b4" stroke-width="4"/></g>
<g transform="translate(542.7 896.6) rotate(-5.7)"><rect x="-24.7" y="-23.2" width="49.4" height="46.5" rx="5" fill="#f3f3f3"/><rect x="-19.7" y="-18.2" width="39.4" height="36.5" rx="4" fill="#ececec"/><path d="M-12.3 -15.2V15.2M0 -15.2V15.2M12.3 -15.2V15.2" stroke="#b4b4b4" stroke-width="4"/></g>
<ellipse cx="446" cy="43" rx="15.0" ry="26.0" fill="#fbfbfb" transform="rotate(-12 446 43)"/>
<ellipse cx="444" cy="113" rx="15.0" ry="26.0" fill="#fbfbfb" transform="rotate(-12 444 113)"/>
<ellipse cx="448" cy="178" rx="14.0" ry="26.0" fill="#fbfbfb" transform="rotate(-12 448 178)"/>
<ellipse cx="450" cy="248" rx="13.0" ry="25.0" fill="#fbfbfb" transform="rotate(-12 450 248)"/>
<ellipse cx="441" cy="320" rx="13.0" ry="27.0" fill="#fbfbfb" transform="rotate(-12 441 320)"/>
<ellipse cx="423" cy="393" rx="14.0" ry="30.0" fill="#fbfbfb" transform="rotate(-12 423 393)"/>
<ellipse cx="413" cy="445" rx="13.0" ry="18.0" fill="#fbfbfb" transform="rotate(-12 413 445)"/>
<ellipse cx="436" cy="481" rx="26.0" ry="16.0" fill="#fbfbfb" transform="rotate(25 436 481)"/>
<ellipse cx="428" cy="526" rx="29.0" ry="20.0" fill="#fbfbfb" transform="rotate(25 428 526)"/>
<ellipse cx="441" cy="583" rx="30.0" ry="19.0" fill="#fbfbfb" transform="rotate(25 441 583)"/>
<ellipse cx="443" cy="621" rx="19.0" ry="16.0" fill="#fbfbfb" transform="rotate(25 443 621)"/>
<path d="M470 500l20 14M465 550l28 16M475 600l24 8" stroke="#f4f4f4" stroke-width="12" stroke-linecap="round"/>
<path d="M452 75l16 14M452 140l16 16M455 210l14 16" stroke="#f4f4f4" stroke-width="10" stroke-linecap="round"/>
<path d="M470 660C500 690 530 720 552 760C568 800 572 850 566 900" fill="none" stroke="#eee" stroke-width="9"/>
</g>
<path d="M110 15L548 15L548 300L545 450L575 680L588 900L135 900L100 740L70 400Z" fill="#000" filter="url(#c2n)" opacity=".22"/>
<path d="M568 15C567 100 565 160 563 208C561 260 558 310 556 358C553 400 551 430 548 458C548 500 550 530 552 548C556 590 562 620 568 648C575 680 580 700 583 718C586 750 588 775 588 798L588 900" fill="none" stroke="#f8f8f8" stroke-width="3.600" filter="url(#c2b)"/>
<rect x="609.500" y="15" width="4.500" height="886" fill="#f4f4f4"/>
<rect x="702" y="15" width="6.500" height="886" fill="#fbfbfb"/>
</g>
<g stroke-width="2.636" fill="none">
<path d="M322.900 197.700V329.500M322.900 593V724.900M58 460H189.800M453.400 460H585.200" stroke="#fff"/>
<path d="M322.900 197.700V329.500M322.900 593V724.900M58 460H189.800M453.400 460H585.200" stroke="#e01010" stroke-dasharray="7.908 7.908"/>
</g>
</svg>
<div class="tlb">ANDY-F-055Y
20180531
2018-05-31
09:45:32.32</div>
<div class="trb" style="right:2px">Alexion
13936
Srs:<span class="cj">矢状面</span>
Img:256</div>
<div class="cm" style="top:293px">24 cm</div>
<svg class="abs" style="left:0;top:0" width="820" height="382" fill="#cfcfcf"><rect x="801" y="95" width="1" height="193"/><rect x="793" y="95" width="8" height="1"/><rect x="797" y="99" width="4" height="1"/><rect x="793" y="103" width="8" height="1"/><rect x="797" y="107" width="4" height="1"/><rect x="793" y="111" width="8" height="1"/><rect x="797" y="115" width="4" height="1"/><rect x="793" y="119" width="8" height="1"/><rect x="797" y="123" width="4" height="1"/><rect x="793" y="127" width="8" height="1"/><rect x="797" y="131" width="4" height="1"/><rect x="793" y="135" width="8" height="1"/><rect x="797" y="139" width="4" height="1"/><rect x="793" y="143" width="8" height="1"/><rect x="797" y="147" width="4" height="1"/><rect x="793" y="151" width="8" height="1"/><rect x="797" y="155" width="4" height="1"/><rect x="793" y="159" width="8" height="1"/><rect x="797" y="163" width="4" height="1"/><rect x="793" y="167" width="8" height="1"/><rect x="797" y="171" width="4" height="1"/><rect x="793" y="175" width="8" height="1"/><rect x="797" y="179" width="4" height="1"/><rect x="793" y="183" width="8" height="1"/><rect x="797" y="187" width="4" height="1"/><rect x="793" y="191" width="8" height="1"/><rect x="797" y="195" width="4" height="1"/><rect x="793" y="199" width="8" height="1"/><rect x="797" y="203" width="4" height="1"/><rect x="793" y="207" width="8" height="1"/><rect x="797" y="211" width="4" height="1"/><rect x="793" y="215" width="8" height="1"/><rect x="797" y="219" width="4" height="1"/><rect x="793" y="223" width="8" height="1"/><rect x="797" y="227" width="4" height="1"/><rect x="793" y="231" width="8" height="1"/><rect x="797" y="235" width="4" height="1"/><rect x="793" y="239" width="8" height="1"/><rect x="797" y="243" width="4" height="1"/><rect x="793" y="247" width="8" height="1"/><rect x="797" y="251" width="4" height="1"/><rect x="793" y="255" width="8" height="1"/><rect x="797" y="259" width="4" height="1"/><rect x="793" y="263" width="8" height="1"/><rect x="797" y="267" width="4" height="1"/><rect x="793" y="271" width="8" height="1"/><rect x="797" y="275" width="4" height="1"/><rect x="793" y="279" width="8" height="1"/><rect x="797" y="283" width="4" height="1"/><rect x="793" y="287" width="8" height="1"/></svg>
<div class="brb" style="right:2px">L:60
W:300</div>
</div>
<div class="pan" style="left:150px;top:507px;width:822px;height:384px">
<svg class="abs" style="left:249px;top:12px" width="320" height="355" viewBox="0 0 832 923">
<defs>
<filter id="c3b" x="-5%" y="-5%" width="110%" height="110%"><feGaussianBlur stdDeviation="2"/></filter>
<filter id="c3n" x="0" y="0" width="100%" height="100%"><feTurbulence type="fractalNoise" baseFrequency="0.22" numOctaves="2" seed="11" result="n"/><feColorMatrix in="n" type="matrix" values="0 0 0 0 0  0 0 0 0 0  0 0 0 0 0  1.6 0 0 0 -0.55" result="a"/><feComposite in="a" in2="SourceAlpha" operator="in"/></filter>
<clipPath id="c3c"><rect x="18" y="25" width="800" height="873"/></clipPath>
</defs>
<g clip-path="url(#c3c)">
<g filter="url(#c3b)">
<!-- skin lines -->
<path d="M20 25C40 90 58 200 58 300C50 380 38 420 42 470C55 560 75 640 72 700C55 770 42 820 40 897" fill="none" stroke="#8c8c8c" stroke-width="2"/>
<path d="M765 25C772 100 772 200 778 260C790 330 802 380 798 430C785 520 772 580 778 640C790 720 805 800 812 897" fill="none" stroke="#8c8c8c" stroke-width="2"/>
<!-- lateral walls -->
<path d="M55 25L110 25C112 60 100 120 102 200C104 300 100 380 104 450C110 520 130 570 135 600L110 610C95 560 85 500 85 440C85 360 88 280 85 200C82 120 65 70 55 25Z" fill="#7c7c7c"/>
<path d="M690 25L735 25C745 100 750 200 752 300C755 400 752 500 745 600L718 600C722 520 728 440 722 360C716 260 700 140 690 25Z" fill="#7c7c7c"/>
<path d="M95 80C98 200 96 330 100 450" stroke="#2c2c2c" stroke-width="3" fill="none"/><path d="M730 150C735 300 738 420 732 560" stroke="#2c2c2c" stroke-width="3" fill="none"/>
<!-- pelvis lateral muscles -->
<path d="M112 640C96 690 86 760 84 897L190 897C186 870 200 850 212 825C190 770 150 700 112 640Z" fill="#8e8e8e"/>
<path d="M746 645C766 700 776 770 776 897L712 897C706 875 690 865 660 845C680 790 715 715 746 645Z" fill="#8e8e8e"/>
<path d="M60 660C50 720 44 800 44 897M790 660C800 730 808 810 812 897" stroke="#7a7a7a" stroke-width="2" fill="none"/>
<path d="M100 700C92 760 90 820 92 880M760 700C768 760 768 820 764 880" stroke="#5a5a5a" stroke-width="4" fill="none"/>
<!-- liver -->
<path d="M128 120C140 85 180 66 230 66C290 66 340 76 372 60L400 25L440 25L445 120C440 160 420 200 395 205C370 200 350 205 330 212C290 205 240 220 200 250C160 285 140 320 122 330C116 270 118 180 128 120Z" fill="#adadad"/>
<path d="M180 220l70-45" stroke="#d8d8d8" stroke-width="5" fill="none"/>
<!-- central vessels -->
<path d="M365 25L470 25C475 60 460 100 455 140C452 200 470 260 480 330C460 345 440 335 425 315C415 260 400 220 385 200C370 150 372 80 365 25Z" fill="#bcbcbc"/>
<ellipse cx="440" cy="102" rx="14" ry="16" fill="#202020"/><circle cx="440" cy="102" r="5" fill="#9a9a9a"/>
<path d="M380 205C378 250 372 290 360 320" stroke="#a4a4a4" stroke-width="22" fill="none"/>
<path d="M318 225C322 280 326 330 322 370" stroke="#8c8c8c" stroke-width="26" fill="none"/>
<!-- spleen / upper right -->
<path d="M470 25L580 25C575 50 560 70 520 85C495 95 478 90 470 70Z" fill="#c8c8c8"/>
<path d="M520 95C560 70 620 62 660 80C672 95 670 110 660 120C620 90 560 95 520 120Z" fill="#a8a8a8"/>
<!-- stomach -->
<ellipse cx="592" cy="158" rx="72" ry="62" fill="#c4c4c4"/><ellipse cx="590" cy="156" rx="62" ry="53" fill="#5c5c5c"/>
<path d="M470 180C500 170 520 190 540 215C560 235 600 225 640 228C660 240 650 270 620 280C580 285 560 300 545 330C520 360 480 350 470 320C478 280 470 230 470 180Z" fill="#7e7e7e"/>
<path d="M555 250C580 235 620 240 640 250C630 270 600 275 575 280Z" fill="#101010"/>
<ellipse cx="500" cy="330" rx="32" ry="22" fill="#c6c6c6"/><ellipse cx="525" cy="225" rx="20" ry="24" fill="#a8a8a8"/>
<!-- right-side kidney & bowel -->
<ellipse cx="575" cy="425" rx="42" ry="34" fill="#9a9a9a"/><ellipse cx="575" cy="418" rx="27" ry="22" fill="#e6e6e6"/>
<g fill="#8e8e8e"><ellipse cx="660" cy="380" rx="17" ry="20"/><ellipse cx="668" cy="436" rx="20" ry="22"/><ellipse cx="668" cy="492" rx="16" ry="18"/><ellipse cx="625" cy="385" rx="16" ry="12"/><ellipse cx="580" cy="500" rx="22" ry="30"/><ellipse cx="578" cy="625" rx="20" ry="48"/></g>
<g fill="#0c0c0c"><circle cx="660" cy="378" r="6"/><circle cx="662" cy="436" r="5"/><circle cx="675" cy="436" r="5"/><circle cx="668" cy="492" r="5"/></g>
<!-- left colon -->
<path d="M150 340C165 290 200 250 250 225C290 215 330 215 340 240C320 260 300 250 285 265C265 290 250 320 240 350C235 400 232 440 245 470C250 500 235 520 205 522C175 520 158 500 160 470C148 430 145 380 150 340Z" fill="#4b4b4b"/>
<g fill="#0a0a0a"><circle cx="180" cy="330" r="8"/><circle cx="200" cy="365" r="7"/><circle cx="172" cy="395" r="7"/><circle cx="195" cy="430" r="8"/><circle cx="215" cy="300" r="7"/><circle cx="250" cy="262" r="9"/><circle cx="285" cy="240" r="8"/><circle cx="182" cy="470" r="6"/><circle cx="215" cy="400" r="5"/><circle cx="232" cy="340" r="6"/><circle cx="300" cy="232" r="6"/></g>
<ellipse cx="280" cy="395" rx="34" ry="45" fill="#a4a4a4"/><ellipse cx="282" cy="492" rx="18" ry="42" fill="#9c9c9c"/>
<ellipse cx="262" cy="618" rx="20" ry="26" fill="#9a9a9a"/><ellipse cx="232" cy="590" rx="14" ry="10" fill="#777"/>
<ellipse cx="300" cy="440" rx="9" ry="14" fill="#d8d8d8"/><ellipse cx="316" cy="440" rx="7" ry="10" fill="#e8e8e8"/>
<!-- psoas -->
<path d="M352 470C335 540 300 620 270 720L300 740C330 680 350 620 360 560Z" fill="#858585"/>
<path d="M478 470C500 540 540 630 580 720L545 740C515 690 490 630 472 560Z" fill="#858585"/>
<path d="M508 420C530 480 560 560 590 640" stroke="#6e6e6e" stroke-width="14" fill="none"/>
<!-- iliopsoas lower -->
<path d="M262 700C240 740 215 760 200 790L240 830C262 790 280 760 298 735Z" fill="#7c7c7c"/>
<path d="M585 700C610 740 630 760 648 790L600 830C580 790 562 760 548 735Z" fill="#7c7c7c"/>
<!-- iliac vessels -->
<path d="M362 610C345 660 325 710 305 765" stroke="#b8b8b8" stroke-width="22" fill="none" stroke-linecap="round"/>
<path d="M472 610C490 660 505 710 520 765" stroke="#b8b8b8" stroke-width="22" fill="none" stroke-linecap="round"/>
<circle cx="332" cy="768" r="15" fill="#aaa"/><circle cx="508" cy="770" r="16" fill="#aaa"/><circle cx="550" cy="780" r="12" fill="#999"/>
<path d="M372 640C360 680 345 720 332 750" stroke="#8a8a8a" stroke-width="12" fill="none"/>
<!-- vertebrae -->
<path d="M395 330L418 318L440 330L440 352L395 352Z" fill="#f0f0f0"/>
<g>
<path d="M365 372C400 362 436 362 470 372L466 392C455 400 458 440 466 452L470 470C436 478 400 478 362 470L366 452C374 440 374 400 366 392Z" fill="#a9a9a9"/>
<path d="M358 486C400 478 436 478 472 486L468 500C458 508 458 530 466 540L470 556C436 564 400 564 358 556L362 540C370 530 370 508 362 500Z" fill="#a9a9a9"/>
<path d="M360 574C400 566 436 566 470 574L466 590C458 596 458 612 464 622L466 640C436 646 400 646 364 640L366 622C372 612 372 596 364 590Z" fill="#a9a9a9"/>
<path d="M374 652C400 648 436 648 452 652L452 670L374 670Z" fill="#f4f4f4"/>
<g stroke="#fbfbfb" stroke-width="13" fill="none" stroke-linecap="round"><path d="M366 377C400 368 436 368 468 377"/><path d="M364 462C400 470 436 470 468 462"/><path d="M360 491C400 484 436 484 470 491"/><path d="M360 549C400 556 436 556 470 549"/><path d="M362 579C400 572 436 572 468 579"/><path d="M366 634C400 640 436 640 464 634"/></g>
<g stroke="#f2f2f2" stroke-width="7" fill="none"><path d="M370 385C378 410 378 430 370 455M462 385C455 410 455 430 462 455M366 498C372 515 372 530 366 545M466 498C460 515 460 530 466 545M368 588C372 600 372 615 368 628M462 588C458 600 458 615 462 628"/></g>
<g stroke="#e4e4e4" stroke-width="4" fill="none"><path d="M400 395V450M432 395V450M405 505V545M428 505V545M400 592V630M432 592V630"/></g>
</g>
<!-- iliac bones -->
<path d="M122 606C132 598 150 600 156 612C160 625 166 640 172 655C195 705 230 760 262 800C280 820 296 835 300 860L302 897L178 897C176 880 180 860 196 845C205 835 212 828 214 818C195 775 165 720 140 660C132 645 120 640 118 625C116 615 118 610 122 606Z" fill="#f7f7f7"/>
<path d="M146 626C170 680 200 730 228 775" stroke="#8e8e8e" stroke-width="5" fill="none"/>
<path d="M126 897C128 880 150 868 172 872C186 876 192 886 194 897Z" fill="#f2f2f2"/>
<path d="M200 850C215 840 240 842 255 855M215 875C230 868 250 870 262 880" stroke="#9a9a9a" stroke-width="5" fill="none"/>
<path d="M737 610C727 600 710 602 703 614C698 628 692 645 686 660C665 710 630 765 596 805C580 822 562 835 558 860L558 897L720 897C716 880 706 868 690 862C672 858 660 850 656 838C672 790 700 730 722 670C730 650 742 645 742 630C743 620 741 614 737 610Z" fill="#f7f7f7"/>
<path d="M712 632C690 690 660 740 630 785" stroke="#8e8e8e" stroke-width="5" fill="none"/>
<path d="M600 850C620 842 650 846 668 862M590 878C610 870 640 872 660 885" stroke="#9a9a9a" stroke-width="5" fill="none"/>
<!-- bladder etc -->
<ellipse cx="400" cy="832" rx="70" ry="40" fill="#a9a9a9"/><circle cx="402" cy="778" r="25" fill="#9a9a9a"/>
<path d="M310 875C370 890 450 890 545 870L545 897L310 897Z" fill="#8a8a8a"/>
<path d="M490 850C520 840 540 815 548 790" stroke="#8c8c8c" stroke-width="14" fill="none"/>
<!-- ribs -->
<g fill="#fbfbfb"><ellipse cx="120" cy="44" rx="6" ry="14"/><ellipse cx="118" cy="100" rx="6" ry="18"/><ellipse cx="113" cy="170" rx="6" ry="18"/><ellipse cx="110" cy="250" rx="6" ry="20"/><ellipse cx="113" cy="345" rx="5" ry="16"/>
<ellipse cx="672" cy="40" rx="7" ry="12"/><ellipse cx="683" cy="95" rx="7" ry="17"/><ellipse cx="702" cy="172" rx="7" ry="18"/><ellipse cx="714" cy="260" rx="6" ry="18"/></g>
</g>
<path d="M55 25L740 25L752 300L745 600L798 897L72 897L110 610L85 440Z" fill="#000" filter="url(#c3n)" opacity=".2"/>
</g>
<g stroke-width="2.600" fill="none">
<path d="M417.300 202.800V332.800M417.300 592.800V722.800M156 464.100H286M546 464.100H676" stroke="#fff"/>
<path d="M417.300 202.800V332.800M417.300 592.800V722.800M156 464.100H286M546 464.100H676" stroke="#e01010" stroke-dasharray="7.800 7.800"/>
</g>
</svg>

<div class="tlb">ANDY-F-055Y
20180531
2018-05-31
09:45:32.32</div>
<div class="trb" style="right:1px">Alexion
13936
Srs:<span class="cj">冠状面</span>
Img:256</div>
<div class="cm" style="top:293px">24 cm</div>
<svg class="abs" style="left:0;top:0" width="820" height="382" fill="#cfcfcf"><rect x="801" y="95" width="1" height="193"/><rect x="793" y="95" width="8" height="1"/><rect x="797" y="99" width="4" height="1"/><rect x="793" y="103" width="8" height="1"/><rect x="797" y="107" width="4" height="1"/><rect x="793" y="111" width="8" height="1"/><rect x="797" y="115" width="4" height="1"/><rect x="793" y="119" width="8" height="1"/><rect x="797" y="123" width="4" height="1"/><rect x="793" y="127" width="8" height="1"/><rect x="797" y="131" width="4" height="1"/><rect x="793" y="135" width="8" height="1"/><rect x="797" y="139" width="4" height="1"/><rect x="793" y="143" width="8" height="1"/><rect x="797" y="147" width="4" height="1"/><rect x="793" y="151" width="8" height="1"/><rect x="797" y="155" width="4" height="1"/><rect x="793" y="159" width="8" height="1"/><rect x="797" y="163" width="4" height="1"/><rect x="793" y="167" width="8" height="1"/><rect x="797" y="171" width="4" height="1"/><rect x="793" y="175" width="8" height="1"/><rect x="797" y="179" width="4" height="1"/><rect x="793" y="183" width="8" height="1"/><rect x="797" y="187" width="4" height="1"/><rect x="793" y="191" width="8" height="1"/><rect x="797" y="195" width="4" height="1"/><rect x="793" y="199" width="8" height="1"/><rect x="797" y="203" width="4" height="1"/><rect x="793" y="207" width="8" height="1"/><rect x="797" y="211" width="4" height="1"/><rect x="793" y="215" width="8" height="1"/><rect x="797" y="219" width="4" height="1"/><rect x="793" y="223" width="8" height="1"/><rect x="797" y="227" width="4" height="1"/><rect x="793" y="231" width="8" height="1"/><rect x="797" y="235" width="4" height="1"/><rect x="793" y="239" width="8" height="1"/><rect x="797" y="243" width="4" height="1"/><rect x="793" y="247" width="8" height="1"/><rect x="797" y="251" width="4" height="1"/><rect x="793" y="255" width="8" height="1"/><rect x="797" y="259" width="4" height="1"/><rect x="793" y="263" width="8" height="1"/><rect x="797" y="267" width="4" height="1"/><rect x="793" y="271" width="8" height="1"/><rect x="797" y="275" width="4" height="1"/><rect x="793" y="279" width="8" height="1"/><rect x="797" y="283" width="4" height="1"/><rect x="793" y="287" width="8" height="1"/></svg>
<div class="brb" style="right:1px">L:60
W:300</div>
</div>
<div class="pan sel" style="left:972px;top:507px;width:823px;height:384px">
<svg class="abs" style="left:287px;top:17px" width="300" height="350" viewBox="0 0 791 923">
<defs>
<filter id="c4b" x="-5%" y="-5%" width="110%" height="110%"><feGaussianBlur stdDeviation="1.600"/></filter>
<filter id="c4r" x="-5%" y="-5%" width="110%" height="110%"><feTurbulence type="fractalNoise" baseFrequency="0.05" numOctaves="2" seed="3" result="t"/><feDisplacementMap in="SourceGraphic" in2="t" scale="14"/><feGaussianBlur stdDeviation="1.200"/></filter>
<pattern id="c4p" width="7" height="10" patternUnits="userSpaceOnUse" patternTransform="rotate(4)"><rect width="7" height="10" fill="#0b0b0b"/><rect x="0" width="2.300" height="10" fill="#3e3e3e"/></pattern>
<radialGradient id="c4g1" cx="0.5" cy="0.5" r="0.5"><stop offset="0" stop-color="#777" stop-opacity=".55"/><stop offset="1" stop-color="#777" stop-opacity="0"/></radialGradient>
<radialGradient id="c4g2" cx="0.5" cy="0.5" r="0.5"><stop offset="0" stop-color="#000" stop-opacity=".75"/><stop offset="1" stop-color="#000" stop-opacity="0"/></radialGradient>
<clipPath id="c4c"><path d="M158 72L655 45L722 828L120 882L150 560Z"/></clipPath>
</defs>
<g clip-path="url(#c4c)">
<rect x="100" y="30" width="650" height="870" fill="url(#c4p)"/>
<ellipse cx="610" cy="560" rx="100" ry="260" fill="url(#c4g1)"/>
<ellipse cx="240" cy="450" rx="90" ry="160" fill="url(#c4g1)"/>
<ellipse cx="480" cy="420" rx="60" ry="200" fill="url(#c4g2)"/>
<ellipse cx="690" cy="300" rx="40" ry="300" fill="url(#c4g2)"/>
<ellipse cx="560" cy="640" rx="40" ry="120" fill="url(#c4g2)"/>
<path d="M560 60C600 200 640 500 700 820" stroke="#000" stroke-width="26" fill="none" opacity=".5"/>
</g>
<g filter="url(#c4b)" fill="none" stroke="#fff" stroke-linecap="round">
<!-- left ribs -->
<path d="M340 80C300 84 250 88 211 95C195 105 185 118 181 125C168 135 158 142 147 151C125 172 108 195 95 220C85 240 78 260 74 280L65 297" stroke-width="17"/>
<path d="M196 64C188 95 202 125 190 150C186 160 180 166 176 170" stroke-width="11"/>
<path d="M165 70C178 78 196 76 208 66" stroke-width="8"/>
<path d="M338 125C300 138 265 152 233 168C200 188 172 212 147 237C122 262 102 285 87 305L78 318" stroke-width="17"/>
<path d="M335 177C298 198 265 220 233 245C200 272 172 300 147 331C132 348 120 360 108 370" stroke-width="17"/>
<path d="M338 237C308 262 280 292 254 323C230 350 207 375 185 400" stroke-width="16"/>
<path d="M155 95C136 118 120 140 108 164C92 192 78 220 70 245L61 280" stroke-width="11.500"/>
<path d="M108 95C96 112 86 130 78 151C70 175 64 200 61 224" stroke-width="7"/>
<path d="M78 91C80 108 84 125 91 138" stroke-width="6"/>
<!-- right ribs -->
<path d="M395 70C420 68 480 69 511 69C525 69 535 71 541 73C546 77 548 82 549 86" stroke-width="13.500"/>
<path d="M399 116C430 114 455 115 476 116C500 120 520 128 532 138C545 150 553 163 558 176" stroke-width="13.500"/>
<path d="M403 176C435 174 465 174 489 176C510 182 528 191 541 202C553 215 562 235 566 253" stroke-width="13.500"/>
<path d="M408 240C430 244 450 250 468 258C492 270 512 286 528 305C545 325 558 348 566 369" stroke-width="13.500"/>
<path d="M433 56C450 50 468 44 485 39" stroke-width="11.500"/>
<path d="M421 133C442 122 460 110 476 99C492 86 505 70 515 56L532 39" stroke-width="12.500"/>
<path d="M412 193C436 182 458 168 476 155C496 138 512 118 524 99C533 84 540 70 545 56" stroke-width="12.500"/>
<path d="M468 245C485 232 500 218 511 202C524 186 534 170 541 155C549 138 554 122 558 108" stroke-width="12.500"/>
<path d="M519 270C532 256 542 242 549 228C556 215 561 204 564 193" stroke-width="11.500"/>
</g>
<g filter="url(#c4r)" fill="#fff" stroke="none">
<!-- spine -->
<path d="M335 75L405 72C410 120 402 200 398 250C392 300 378 330 372 360C380 400 385 430 392 470C398 510 400 540 410 570L440 600L400 640L330 600C318 570 300 540 305 500C295 470 290 430 300 400C298 360 310 330 318 300C326 250 330 150 335 75Z"/>
<path d="M300 330L330 340M290 408L325 412M290 488L322 490M300 530L330 535M395 430L440 425M398 485L436 483M395 370L430 372" stroke="#fff" stroke-width="9" stroke-linecap="round"/>
<!-- pelvis -->
<path d="M75 682C80 660 86 650 93 641C105 620 116 606 129 594C150 580 170 570 191 566C220 560 250 562 273 566C285 572 295 578 304 584C315 592 325 598 335 605C350 615 362 622 376 625C395 622 412 610 427 594C440 600 460 612 479 620C480 600 482 575 489 558C497 545 508 540 520 538C535 536 548 540 556 546C565 555 568 568 566 579C560 600 548 620 540 641C532 665 526 690 525 713C526 740 532 770 540 795C550 805 560 810 571 810C576 802 582 796 587 795C598 798 608 806 612 815C600 822 585 825 571 826C525 832 480 835 438 836C405 840 375 842 345 844L345 841C365 832 378 824 386 815C400 808 410 800 412 790C408 770 398 755 386 744C372 730 358 724 345 723C325 726 308 734 294 744C280 750 272 756 265 764C262 772 264 778 268 785C280 800 292 814 304 826C308 832 310 840 309 846L312 864C285 868 258 869 232 870C195 873 160 876 124 877C135 862 150 850 165 840C172 834 178 830 181 826C176 820 172 815 170 810C160 798 152 786 145 774C140 760 135 746 129 733C115 728 103 722 93 715C84 706 78 694 75 682Z"/>
<path d="M330 600C350 640 380 660 410 700C430 740 440 780 450 820" stroke="#fff" stroke-width="30" fill="none"/>
<circle cx="445" cy="352" r="6"/><circle cx="422" cy="404" r="5"/><circle cx="430" cy="484" r="5"/><circle cx="525" cy="345" r="4"/>
</g>
<g fill="#1a1a1a" filter="url(#c4b)"><ellipse cx="380" cy="690" rx="7" ry="4" transform="rotate(-30 380 690)"/><ellipse cx="395" cy="720" rx="6" ry="4" transform="rotate(-30 395 720)"/><ellipse cx="410" cy="752" rx="6" ry="4" transform="rotate(-40 410 752)"/><ellipse cx="425" cy="780" rx="5" ry="3.500"/><ellipse cx="400" cy="672" rx="5" ry="3"/><ellipse cx="437" cy="742" rx="4" ry="3"/><ellipse cx="318" cy="345" rx="6" ry="3.500"/><ellipse cx="312" cy="420" rx="6" ry="3.500"/><ellipse cx="315" cy="470" rx="7" ry="4"/><ellipse cx="322" cy="520" rx="6" ry="3.500"/><ellipse cx="372" cy="540" rx="7" ry="3.500" transform="rotate(-30 372 540)"/><ellipse cx="360" cy="590" rx="8" ry="3.500" transform="rotate(-30 360 590)"/><ellipse cx="330" cy="285" rx="5" ry="3"/><ellipse cx="440" cy="600" rx="8" ry="5" transform="rotate(-40 440 600)"/></g>
<g fill="#8a8a8a" filter="url(#c4b)"><ellipse cx="215" cy="615" rx="22" ry="9" transform="rotate(-15 215 615)"/><ellipse cx="525" cy="575" rx="9" ry="12"/></g>
</svg>

<div class="tlb">ANDY-F-055Y
20180531
2018-05-31
09:45:32.32</div>
<div class="trb" style="right:3px">Alexion
13936
Srs:MIN
Img:</div>
<div class="cm" style="top:290px;right:5px">27 cm</div>
<svg class="abs" style="left:0;top:0" width="820" height="382" fill="#cfcfcf"><rect x="801" y="95" width="1" height="191"/><rect x="793" y="95" width="8" height="1"/><rect x="797" y="99" width="4" height="1"/><rect x="793" y="102" width="8" height="1"/><rect x="797" y="106" width="4" height="1"/><rect x="793" y="109" width="8" height="1"/><rect x="797" y="113" width="4" height="1"/><rect x="793" y="116" width="8" height="1"/><rect x="797" y="120" width="4" height="1"/><rect x="793" y="123" width="8" height="1"/><rect x="797" y="127" width="4" height="1"/><rect x="793" y="130" width="8" height="1"/><rect x="797" y="134" width="4" height="1"/><rect x="793" y="137" width="8" height="1"/><rect x="797" y="141" width="4" height="1"/><rect x="793" y="144" width="8" height="1"/><rect x="797" y="148" width="4" height="1"/><rect x="793" y="151" width="8" height="1"/><rect x="797" y="155" width="4" height="1"/><rect x="793" y="158" width="8" height="1"/><rect x="797" y="162" width="4" height="1"/><rect x="793" y="165" width="8" height="1"/><rect x="797" y="169" width="4" height="1"/><rect x="793" y="172" width="8" height="1"/><rect x="797" y="176" width="4" height="1"/><rect x="793" y="179" width="8" height="1"/><rect x="797" y="183" width="4" height="1"/><rect x="793" y="186" width="8" height="1"/><rect x="797" y="190" width="4" height="1"/><rect x="793" y="193" width="8" height="1"/><rect x="797" y="197" width="4" height="1"/><rect x="793" y="200" width="8" height="1"/><rect x="797" y="204" width="4" height="1"/><rect x="793" y="207" width="8" height="1"/><rect x="797" y="211" width="4" height="1"/><rect x="793" y="214" width="8" height="1"/><rect x="797" y="218" width="4" height="1"/><rect x="793" y="221" width="8" height="1"/><rect x="797" y="225" width="4" height="1"/><rect x="793" y="228" width="8" height="1"/><rect x="797" y="232" width="4" height="1"/><rect x="793" y="235" width="8" height="1"/><rect x="797" y="239" width="4" height="1"/><rect x="793" y="242" width="8" height="1"/><rect x="797" y="246" width="4" height="1"/><rect x="793" y="249" width="8" height="1"/><rect x="797" y="253" width="4" height="1"/><rect x="793" y="256" width="8" height="1"/><rect x="797" y="260" width="4" height="1"/><rect x="793" y="263" width="8" height="1"/><rect x="797" y="267" width="4" height="1"/><rect x="793" y="271" width="8" height="1"/><rect x="797" y="274" width="4" height="1"/><rect x="793" y="278" width="8" height="1"/><rect x="797" y="281" width="4" height="1"/><rect x="793" y="285" width="8" height="1"/></svg>
<div class="brb" style="right:3px">L:440
W:242</div>
</div>
<div class="abs" id="status"><span class="abs" style="left:7px;top:0">fsyDicomViewer</span><span class="abs" style="left:1693px;top:0;color:#8fb4d6">CAP</span><span class="abs" style="left:1721px;top:0">NUM</span><span class="abs" style="left:1755px;top:0;color:#8fb4d6">SCRL</span><svg class="abs" style="left:1789px;top:12px" width="10" height="10" viewBox="0 0 10 10" fill="#fff"><rect x="7" y="1" width="2" height="2"/><rect x="4" y="4" width="2" height="2"/><rect x="7" y="4" width="2" height="2"/><rect x="1" y="7" width="2" height="2"/><rect x="4" y="7" width="2" height="2"/><rect x="7" y="7" width="2" height="2"/></svg>
</div>
</div>
</body>
</html>
